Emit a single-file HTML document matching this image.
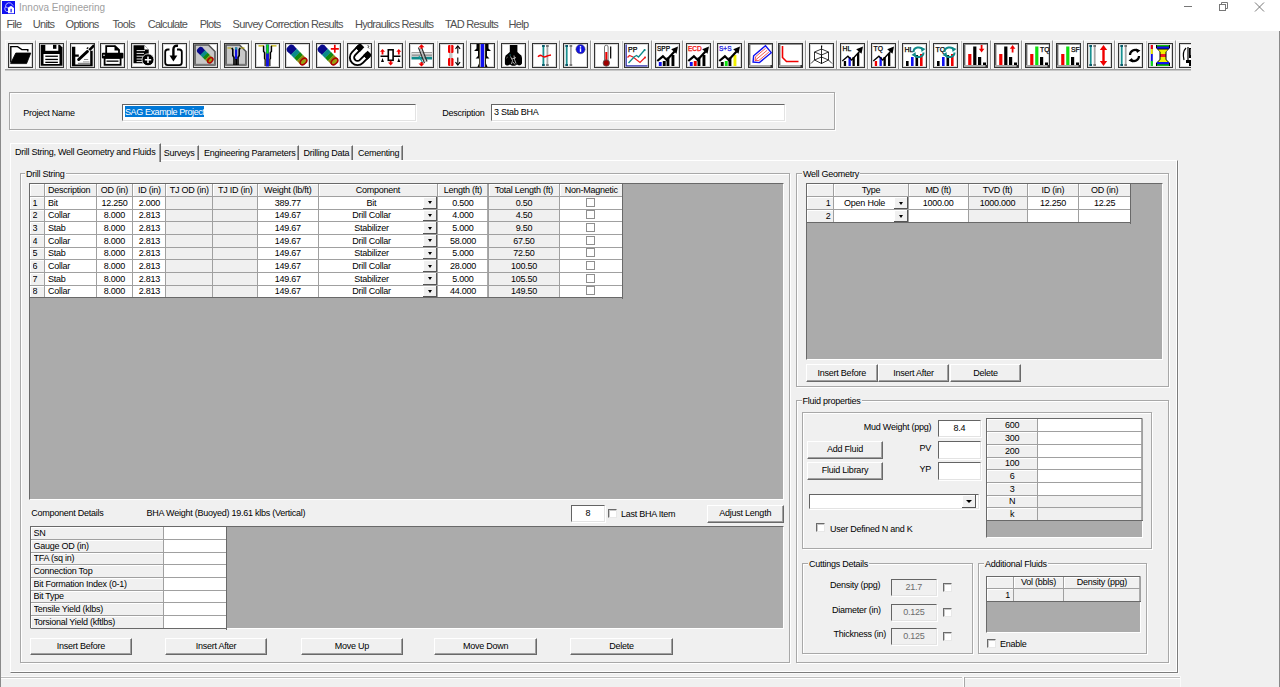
<!DOCTYPE html><html><head><meta charset="utf-8"><style>
html,body{margin:0;padding:0;}
body{width:1280px;height:687px;overflow:hidden;position:relative;background:#f0f0f0;font-family:"Liberation Sans", sans-serif;font-size:9px;color:#000;}
div{position:absolute;box-sizing:content-box;}
.t{white-space:nowrap;line-height:1;letter-spacing:-0.25px;}
.btn{border-top:1px solid #fff;border-left:1px solid #fff;border-right:1px solid #696969;border-bottom:1px solid #696969;box-shadow:inset -1px -1px 0 #a0a0a0;background:#f0f0f0;text-align:center;white-space:nowrap;letter-spacing:-0.25px;}
.tb{border-top:1px solid #646464;border-left:1px solid #646464;border-right:1px solid #e3e3e3;border-bottom:1px solid #e3e3e3;box-shadow:1px 1px 0 #fff;white-space:nowrap;overflow:hidden;letter-spacing:-0.25px;}
.ic{position:absolute;}
</style></head><body>
<div style="left:0px;top:0px;width:1280px;height:31px;background:#fff;"></div>
<div style="left:0px;top:0px;width:1px;height:687px;background:#8a8a8a;"></div>
<div style="left:1279px;top:31px;width:1px;height:656px;background:#8a8a8a;"></div>
<svg class="ic" style="left:2px;top:1px" width="13" height="13" viewBox="0 0 13 13"><rect width="13" height="13" fill="#1010f0"/><path d="M4 6.5 Q3 4.5 4.5 2.8 Q6.5 1.2 8.5 2 L11.5 4.8" fill="none" stroke="#c8c8ff" stroke-width="0.9"/><path d="M3.5 5.5 Q2.2 8 3.2 9.5 Q4.5 11 6.5 10.5" fill="none" stroke="#c8c8ff" stroke-width="0.9"/><path d="M4.2 6.2 Q6 8 7.5 6" fill="none" stroke="#c8c8ff" stroke-width="0.8"/><path d="M6 7 L9 4.8 L12 7 V12.2 H6 Z" fill="#fff"/><rect x="8.5" y="7.8" width="1.2" height="3.5" fill="#1010f0"/></svg>
<div class="t" style="left:19px;top:3.2px;font-size:10px;color:#a0a0a0;letter-spacing:0;">Innova Engineering</div>
<div style="left:1184px;top:6px;width:8px;height:1px;background:#777;"></div>
<svg class="ic" style="left:1218px;top:1px" width="11" height="11" viewBox="0 0 11 11"><rect x="1.5" y="3.5" width="6" height="6" fill="none" stroke="#777"/><path d="M3.5 3.5 V1.5 H9.5 V7.5 H7.5" fill="none" stroke="#777"/></svg>
<svg class="ic" style="left:1254px;top:2px" width="11" height="10" viewBox="0 0 11 10"><path d="M1 0.5 L10 9.5 M10 0.5 L1 9.5" stroke="#666" stroke-width="0.9"/></svg>
<div class="t" style="left:6.6px;top:18.6px;font-size:11px;color:#505050;letter-spacing:-0.7px;">File</div>
<div class="t" style="left:32.8px;top:18.6px;font-size:11px;color:#505050;letter-spacing:-0.7px;">Units</div>
<div class="t" style="left:65.6px;top:18.6px;font-size:11px;color:#505050;letter-spacing:-0.7px;">Options</div>
<div class="t" style="left:112.5px;top:18.6px;font-size:11px;color:#505050;letter-spacing:-0.7px;">Tools</div>
<div class="t" style="left:147.7px;top:18.6px;font-size:11px;color:#505050;letter-spacing:-0.7px;">Calculate</div>
<div class="t" style="left:199.7px;top:18.6px;font-size:11px;color:#505050;letter-spacing:-0.7px;">Plots</div>
<div class="t" style="left:232.6px;top:18.6px;font-size:11px;color:#505050;letter-spacing:-0.7px;">Survey Correction Results</div>
<div class="t" style="left:354.9px;top:18.6px;font-size:11px;color:#505050;letter-spacing:-0.7px;">Hydraulics Results</div>
<div class="t" style="left:444.9px;top:18.6px;font-size:11px;color:#505050;letter-spacing:-0.7px;">TAD Results</div>
<div class="t" style="left:508.5px;top:18.6px;font-size:11px;color:#505050;letter-spacing:-0.7px;">Help</div>
<div style="left:5px;top:40px;width:29px;height:29px;border-top:1px solid #fbfbfb;border-left:1px solid #fbfbfb;border-right:1px solid #9a9a9a;border-bottom:1px solid #a0a0a0;box-shadow:1px 0 0 #c4c4c4;"></div>
<div style="left:8px;top:43px;width:23px;height:23px;border:1px solid #333;background:#fff;overflow:hidden;box-shadow:inset 0 0 0 1px #d8d8d8"><svg width="23" height="23" viewBox="0 0 23 23" style="position:absolute;left:0;top:0"><path d="M1.8 18.5 V2.6 H8.6 L12.8 5.6 H18.8 V7.5" fill="none" stroke="#000" stroke-width="1.4"/><path d="M1.6 19.6 L6.8 9 H21.8 L17.6 19.6 Z" fill="#000" stroke="#000" stroke-width="0.8" stroke-linejoin="round"/></svg></div>
<div style="left:36px;top:40px;width:29px;height:29px;border-top:1px solid #fbfbfb;border-left:1px solid #fbfbfb;border-right:1px solid #9a9a9a;border-bottom:1px solid #a0a0a0;box-shadow:1px 0 0 #c4c4c4;"></div>
<div style="left:39px;top:43px;width:23px;height:23px;border:1px solid #333;background:#fff;overflow:hidden;box-shadow:inset 0 0 0 1px #d8d8d8"><svg width="23" height="23" viewBox="0 0 23 23" style="position:absolute;left:0;top:0"><path d="M0.8 0.8 H19.8 L22.4 3.4 V21.8 H0.8 Z" fill="#000"/><rect x="5.3" y="0.8" width="13" height="6" fill="#fff"/><rect x="13" y="0.8" width="3.4" height="4" fill="#000"/><rect x="3.5" y="10" width="16" height="10" fill="#fff"/><rect x="5.3" y="11.6" width="12.6" height="1.3" fill="#000"/><rect x="5.3" y="14.8" width="12.6" height="1.3" fill="#000"/><rect x="5.3" y="17.7" width="12.6" height="1.3" fill="#000"/></svg></div>
<div style="left:67px;top:40px;width:29px;height:29px;border-top:1px solid #fbfbfb;border-left:1px solid #fbfbfb;border-right:1px solid #9a9a9a;border-bottom:1px solid #a0a0a0;box-shadow:1px 0 0 #c4c4c4;"></div>
<div style="left:70px;top:43px;width:23px;height:23px;border:1px solid #333;background:#fff;overflow:hidden;box-shadow:inset 0 0 0 1px #d8d8d8"><svg width="23" height="23" viewBox="0 0 23 23" style="position:absolute;left:0;top:0"><path d="M1 2.7 H4.3 V10.4 H7.8 V12.7 H4.3 V20.6 H19.2 V6.8 H21.7 V22.2 H1 Z" fill="#000"/><path d="M7.6 15.6 L16.5 7.4" stroke="#000" stroke-width="2.8" stroke-linecap="round"/><path d="M18.3 6.2 L23.2 1.2" stroke="#000" stroke-width="2.6"/><rect x="15.5" y="3.5" width="2" height="1.3" fill="#000" transform="rotate(-40 16.5 4.1)"/><path d="M13 15.5 H17.2 M6.9 19.3 H18.9" stroke="#8a8a8a" stroke-width="1.2"/><path d="M12 17.8 H18.5" stroke="#555" stroke-width="0.5"/></svg></div>
<div style="left:97px;top:40px;width:29px;height:29px;border-top:1px solid #fbfbfb;border-left:1px solid #fbfbfb;border-right:1px solid #9a9a9a;border-bottom:1px solid #a0a0a0;box-shadow:1px 0 0 #c4c4c4;"></div>
<div style="left:100px;top:43px;width:23px;height:23px;border:1px solid #333;background:#fff;overflow:hidden;box-shadow:inset 0 0 0 1px #d8d8d8"><svg width="23" height="23" viewBox="0 0 23 23" style="position:absolute;left:0;top:0"><path d="M5.2 9.5 V2.1 H14 L18 6 V9.5" fill="none" stroke="#000" stroke-width="1.8"/><path d="M13.5 1.2 L18.8 6.5 H13.5 Z" fill="#000"/><rect x="0.9" y="8.8" width="21.5" height="5.8" rx="1" fill="#000"/><circle cx="3" cy="11.2" r="0.8" fill="#fff"/><rect x="3.6" y="14" width="16" height="6.8" fill="#fff" stroke="#000" stroke-width="1.8"/><rect x="5.5" y="16.5" width="12" height="1.3" fill="#000"/></svg></div>
<div style="left:128px;top:40px;width:29px;height:29px;border-top:1px solid #fbfbfb;border-left:1px solid #fbfbfb;border-right:1px solid #9a9a9a;border-bottom:1px solid #a0a0a0;box-shadow:1px 0 0 #c4c4c4;"></div>
<div style="left:131px;top:43px;width:23px;height:23px;border:1px solid #333;background:#fff;overflow:hidden;box-shadow:inset 0 0 0 1px #d8d8d8"><svg width="23" height="23" viewBox="0 0 23 23" style="position:absolute;left:0;top:0"><path d="M1.5 1.2 H12.5 L16.7 5.5 V19.2 H1.5 Z" fill="#000"/><path d="M12.3 1.2 V5.6 H16.8 Z" fill="#fff"/><path d="M4.6 6.6 H13 M4.6 9.4 H12 M4.6 12.2 H11 M4.6 15 H10 M4.6 17.6 H10" stroke="#fff" stroke-width="0.9"/><circle cx="16" cy="15.8" r="6" fill="#000" stroke="#fff" stroke-width="0.8"/><path d="M16 12.6 V19 M12.8 15.8 H19.2" stroke="#fff" stroke-width="1.5"/></svg></div>
<div style="left:159px;top:40px;width:29px;height:29px;border-top:1px solid #fbfbfb;border-left:1px solid #fbfbfb;border-right:1px solid #9a9a9a;border-bottom:1px solid #a0a0a0;box-shadow:1px 0 0 #c4c4c4;"></div>
<div style="left:162px;top:43px;width:23px;height:23px;border:1px solid #333;background:#fff;overflow:hidden;box-shadow:inset 0 0 0 1px #d8d8d8"><svg width="23" height="23" viewBox="0 0 23 23" style="position:absolute;left:0;top:0"><path d="M6.5 5.5 H4.8 Q2.2 5.5 2.2 8.1 V18.6 Q2.2 21.2 4.8 21.2 H16.2 Q18.8 21.2 18.8 18.6 V8.1 Q18.8 5.5 16.2 5.5 H14" fill="none" stroke="#000" stroke-width="1.8"/><path d="M15 1.8 Q10.4 1.2 10.4 5.5 V12.5" stroke="#000" stroke-width="2.4" fill="none"/><path d="M6.5 11.5 H14.3 L10.4 17.5 Z" fill="#000"/></svg></div>
<div style="left:190px;top:40px;width:29px;height:29px;border-top:1px solid #fbfbfb;border-left:1px solid #fbfbfb;border-right:1px solid #9a9a9a;border-bottom:1px solid #a0a0a0;box-shadow:1px 0 0 #c4c4c4;"></div>
<div style="left:193px;top:43px;width:23px;height:23px;border:1px solid #333;background:#fff;overflow:hidden;box-shadow:inset 0 0 0 1px #d8d8d8"><svg width="23" height="23" viewBox="0 0 23 23" style="position:absolute;left:0;top:0"><path d="M1 1 H14.5 L21 7.5 V21.8 H1 Z" fill="#c8c8c8"/><path d="M1 21.8 V1 H14.5 L21 7.5 V21.8" fill="none" stroke="#555" stroke-width="1.6"/><rect x="1" y="19.8" width="20" height="2.2" fill="#777"/><g transform="translate(11 11) rotate(45)"><rect x="-9.54" y="-3.4" width="5.44" height="6.8" rx="2.72" fill="#0a0a8c"/><rect x="-7.5" y="-3.4" width="4.4" height="6.8" fill="#0a0a8c"/><rect x="-3.3" y="-3.4" width="3.8000000000000007" height="6.8" fill="#0a8a8a"/><rect x="0.3000000000000007" y="-3.4" width="3.1999999999999984" height="6.8" fill="#108a10"/><rect x="3.299999999999999" y="-3.4" width="4.400000000000001" height="6.8" fill="#8a8a10"/><ellipse cx="7.5" cy="0" rx="2.04" ry="3.06" fill="#9aa010" stroke="#b00000" stroke-width="1.5"/></g></svg></div>
<div style="left:221px;top:40px;width:29px;height:29px;border-top:1px solid #fbfbfb;border-left:1px solid #fbfbfb;border-right:1px solid #9a9a9a;border-bottom:1px solid #a0a0a0;box-shadow:1px 0 0 #c4c4c4;"></div>
<div style="left:224px;top:43px;width:23px;height:23px;border:1px solid #333;background:#fff;overflow:hidden;box-shadow:inset 0 0 0 1px #d8d8d8"><svg width="23" height="23" viewBox="0 0 23 23" style="position:absolute;left:0;top:0"><path d="M1 1 H14.5 L21 7.5 V21.8 H1 Z" fill="#c8c8c8"/><path d="M1 21.8 V1 H14.5 L21 7.5 V21.8" fill="none" stroke="#555" stroke-width="1.6"/><rect x="1" y="19.8" width="20" height="2.2" fill="#777"/><path d="M2.5 4 H6.5 M15.5 4 H19.5" stroke="#b8a800" stroke-width="1.2"/><path d="M6.8 4 L7.8 5.5 V11.5 L9 13.5 V21 M15.2 4 L14.2 5.5 V11.5 L13 13.5 V21" fill="none" stroke="#000" stroke-width="1.6"/><rect x="10" y="3.5" width="2.2" height="12" fill="#1010e0"/><rect x="10" y="3.5" width="2.2" height="2" fill="#1a9a9a"/><rect x="10.2" y="15" width="1.8" height="6" fill="#000"/></svg></div>
<div style="left:252px;top:40px;width:29px;height:29px;border-top:1px solid #fbfbfb;border-left:1px solid #fbfbfb;border-right:1px solid #9a9a9a;border-bottom:1px solid #a0a0a0;box-shadow:1px 0 0 #c4c4c4;"></div>
<div style="left:255px;top:43px;width:23px;height:23px;border:1px solid #333;background:#fff;overflow:hidden;box-shadow:inset 0 0 0 1px #d8d8d8"><svg width="23" height="23" viewBox="0 0 23 23" style="position:absolute;left:0;top:0"><path d="M2.5 1.8 H8 M15 1.8 H20.5" stroke="#c0b000" stroke-width="1.3"/><path d="M7.6 1.8 V7.5 L8.6 8.5 V14.5 L9.3 15.5 V22 M15.4 1.8 V7.5 L14.4 8.5 V14.5 L13.7 15.5 V22" fill="none" stroke="#000" stroke-width="1.5"/><rect x="9.8" y="0.5" width="3.4" height="22" fill="#1010e0"/><rect x="10.3" y="0.5" width="2.4" height="9" fill="#10e010"/><path d="M9.6 9 V22 M13.4 9 V22" stroke="#a09020" stroke-width="0.6"/></svg></div>
<div style="left:282px;top:40px;width:29px;height:29px;border-top:1px solid #fbfbfb;border-left:1px solid #fbfbfb;border-right:1px solid #9a9a9a;border-bottom:1px solid #a0a0a0;box-shadow:1px 0 0 #c4c4c4;"></div>
<div style="left:285px;top:43px;width:23px;height:23px;border:1px solid #333;background:#fff;overflow:hidden;box-shadow:inset 0 0 0 1px #d8d8d8"><svg width="23" height="23" viewBox="0 0 23 23" style="position:absolute;left:0;top:0"><g transform="translate(10.8 10.8) rotate(45)"><rect x="-12.05" y="-4.25" width="6.800000000000001" height="8.5" rx="3.4000000000000004" fill="#0a0a8c"/><rect x="-9.5" y="-4.25" width="5.5200000000000005" height="8.5" fill="#0a0a8c"/><rect x="-4.18" y="-4.25" width="4.760000000000001" height="8.5" fill="#0a8a8a"/><rect x="0.3800000000000008" y="-4.25" width="3.999999999999999" height="8.5" fill="#108a10"/><rect x="4.18" y="-4.25" width="5.5200000000000005" height="8.5" fill="#8a8a10"/><ellipse cx="9.5" cy="0" rx="2.55" ry="3.825" fill="#9aa010" stroke="#b00000" stroke-width="1.5"/></g></svg></div>
<div style="left:313px;top:40px;width:29px;height:29px;border-top:1px solid #fbfbfb;border-left:1px solid #fbfbfb;border-right:1px solid #9a9a9a;border-bottom:1px solid #a0a0a0;box-shadow:1px 0 0 #c4c4c4;"></div>
<div style="left:316px;top:43px;width:23px;height:23px;border:1px solid #333;background:#fff;overflow:hidden;box-shadow:inset 0 0 0 1px #d8d8d8"><svg width="23" height="23" viewBox="0 0 23 23" style="position:absolute;left:0;top:0"><g transform="translate(10.8 10.8) rotate(45)"><rect x="-12.05" y="-4.25" width="6.800000000000001" height="8.5" rx="3.4000000000000004" fill="#0a0a8c"/><rect x="-9.5" y="-4.25" width="5.5200000000000005" height="8.5" fill="#0a0a8c"/><rect x="-4.18" y="-4.25" width="4.760000000000001" height="8.5" fill="#0a8a8a"/><rect x="0.3800000000000008" y="-4.25" width="3.999999999999999" height="8.5" fill="#108a10"/><rect x="4.18" y="-4.25" width="5.5200000000000005" height="8.5" fill="#8a8a10"/><ellipse cx="9.5" cy="0" rx="2.55" ry="3.825" fill="#9aa010" stroke="#b00000" stroke-width="1.5"/></g><path d="M17.8 0.8 V8.8 M13.8 4.8 H21.8" stroke="#f00000" stroke-width="1.7"/></svg></div>
<div style="left:344px;top:40px;width:29px;height:29px;border-top:1px solid #fbfbfb;border-left:1px solid #fbfbfb;border-right:1px solid #9a9a9a;border-bottom:1px solid #a0a0a0;box-shadow:1px 0 0 #c4c4c4;"></div>
<div style="left:347px;top:43px;width:23px;height:23px;border:1px solid #333;background:#fff;overflow:hidden;box-shadow:inset 0 0 0 1px #d8d8d8"><svg width="23" height="23" viewBox="0 0 23 23" style="position:absolute;left:0;top:0"><g transform="translate(-1.5 1) rotate(45 11 12.5)"><path d="M5.5 3 V12.5 A5.5 5.5 0 0 0 16.5 12.5 V3" fill="none" stroke="#000" stroke-width="6.2"/><path d="M5.5 7 V12.5 A5.5 5.5 0 0 0 16.5 12.5 V7" fill="none" stroke="#fff" stroke-width="2.4"/><rect x="2.4" y="0.5" width="6.2" height="6.5" fill="#000"/><rect x="13.4" y="0.5" width="6.2" height="6.5" fill="#000"/></g><path d="M19.5 1 L21 2.5 L19.8 3 L21.2 4.5" stroke="#333" stroke-width="0.8" fill="none"/></svg></div>
<div style="left:375px;top:40px;width:29px;height:29px;border-top:1px solid #fbfbfb;border-left:1px solid #fbfbfb;border-right:1px solid #9a9a9a;border-bottom:1px solid #a0a0a0;box-shadow:1px 0 0 #c4c4c4;"></div>
<div style="left:378px;top:43px;width:23px;height:23px;border:1px solid #333;background:#fff;overflow:hidden;box-shadow:inset 0 0 0 1px #d8d8d8"><svg width="23" height="23" viewBox="0 0 23 23" style="position:absolute;left:0;top:0"><rect x="9.3" y="5.8" width="4.8" height="10.5" fill="#fff" stroke="#000" stroke-width="1.6"/><path d="M1.5 12.2 H9 M14.5 12.2 H21.5" stroke="#000" stroke-width="1.4"/><path d="M3.5 5 L1 7.8 H2.6 V10.5 H4.4 V7.8 H6 Z M19.8 5 L17.3 7.8 H18.9 V10.5 H20.7 V7.8 H22.3 Z" fill="#f00000"/><path d="M11.7 21.5 L9 18.5 H10.8 V16.8 H12.6 V18.5 H14.4 Z" fill="#f00000"/><path d="M3.5 14 L2 18 H5 Z M19.8 14 L18.3 18 H21.3 Z" fill="#000"/></svg></div>
<div style="left:406px;top:40px;width:29px;height:29px;border-top:1px solid #fbfbfb;border-left:1px solid #fbfbfb;border-right:1px solid #9a9a9a;border-bottom:1px solid #a0a0a0;box-shadow:1px 0 0 #c4c4c4;"></div>
<div style="left:409px;top:43px;width:23px;height:23px;border:1px solid #333;background:#fff;overflow:hidden;box-shadow:inset 0 0 0 1px #d8d8d8"><svg width="23" height="23" viewBox="0 0 23 23" style="position:absolute;left:0;top:0"><rect x="1.5" y="8" width="20.5" height="4.5" fill="#9c9c9c"/><rect x="1.5" y="9" width="20.5" height="1.4" fill="#e0e0e0"/><rect x="1.5" y="12.5" width="20.5" height="3" fill="#108a8a"/><rect x="1.5" y="12.2" width="20.5" height="0.8" fill="#d0d0d0"/><path d="M8.5 3.5 L14.5 19 M11.5 3.5 L17 17.5" stroke="#333" stroke-width="1.3"/><path d="M10 4 L15.5 18" stroke="#bbb" stroke-width="1.2"/><path d="M9 12 L13 19.5" stroke="#1a9a9a" stroke-width="1.2"/><path d="M11.5 0.3 L8.5 3.3 H10.5 V4.8 H12.5 V3.3 H14.5 Z M11.5 22.5 L8.5 19.5 H10.5 V18 H12.5 V19.5 H14.5 Z" fill="#f00000"/></svg></div>
<div style="left:436px;top:40px;width:29px;height:29px;border-top:1px solid #fbfbfb;border-left:1px solid #fbfbfb;border-right:1px solid #9a9a9a;border-bottom:1px solid #a0a0a0;box-shadow:1px 0 0 #c4c4c4;"></div>
<div style="left:439px;top:43px;width:23px;height:23px;border:1px solid #333;background:#fff;overflow:hidden;box-shadow:inset 0 0 0 1px #d8d8d8"><svg width="23" height="23" viewBox="0 0 23 23" style="position:absolute;left:0;top:0"><rect x="8" y="1" width="5.5" height="8" rx="1.2" fill="#f00000"/><rect x="8" y="14" width="5.5" height="8" rx="1.2" fill="#f00000"/><rect x="10.4" y="1" width="0.8" height="21" fill="#fff"/><rect x="9" y="9" width="3.5" height="5" fill="#c8c8c8"/><path d="M17.8 2.5 V9.5 M17.8 13.5 V20.5" stroke="#000" stroke-width="1.1"/><path d="M15.5 4.8 L17.8 1.8 L20.1 4.8 M15.5 18.2 L17.8 21.2 L20.1 18.2" fill="none" stroke="#000" stroke-width="1.1"/></svg></div>
<div style="left:467px;top:40px;width:29px;height:29px;border-top:1px solid #fbfbfb;border-left:1px solid #fbfbfb;border-right:1px solid #9a9a9a;border-bottom:1px solid #a0a0a0;box-shadow:1px 0 0 #c4c4c4;"></div>
<div style="left:470px;top:43px;width:23px;height:23px;border:1px solid #333;background:#fff;overflow:hidden;box-shadow:inset 0 0 0 1px #d8d8d8"><svg width="23" height="23" viewBox="0 0 23 23" style="position:absolute;left:0;top:0"><rect x="9.6" y="0" width="3.6" height="23" fill="#1010f0"/><path d="M5.5 0 H8.8 V23 H6.5 L8 19.5 V14.5 L4.5 14.5 L7 12 V7 L3 7 L5.5 4.5 Z" fill="#000"/><path d="M17.5 0 H14 V23 H16.5 L15 19.5 V14.5 L18.5 14.5 L16 12 V7 L20 7 L17.5 4.5 Z" fill="#000"/><path d="M8.8 0 V23 M14 0 V23" stroke="#8a7a40" stroke-width="0.5"/></svg></div>
<div style="left:498px;top:40px;width:29px;height:29px;border-top:1px solid #fbfbfb;border-left:1px solid #fbfbfb;border-right:1px solid #9a9a9a;border-bottom:1px solid #a0a0a0;box-shadow:1px 0 0 #c4c4c4;"></div>
<div style="left:501px;top:43px;width:23px;height:23px;border:1px solid #333;background:#fff;overflow:hidden;box-shadow:inset 0 0 0 1px #d8d8d8"><svg width="23" height="23" viewBox="0 0 23 23" style="position:absolute;left:0;top:0"><path d="M7.8 0.9 H15.4 V8 L17.5 10 Q20 11 20 14 V19.5 Q19 21.5 17 21.5 L15 20.5 L13 21.8 H10 L8 20.5 L6 21.5 Q3 21.5 2.9 19.5 V14 Q3 11 5.5 10 L7.8 8 Z" fill="#000"/><path d="M8.5 12.5 L10.5 16.5 L9.5 20 M12 11.5 L12.5 15.5 L14 19.5 M10 15 L14 13.5 M4.5 14 L5.5 13.2 M11 18 L13 20.5" fill="none" stroke="#d8d8d8" stroke-width="0.8"/><rect x="7.5" y="10.5" width="1.2" height="1" fill="#1a9a9a"/></svg></div>
<div style="left:529px;top:40px;width:29px;height:29px;border-top:1px solid #fbfbfb;border-left:1px solid #fbfbfb;border-right:1px solid #9a9a9a;border-bottom:1px solid #a0a0a0;box-shadow:1px 0 0 #c4c4c4;"></div>
<div style="left:532px;top:43px;width:23px;height:23px;border:1px solid #333;background:#fff;overflow:hidden;box-shadow:inset 0 0 0 1px #d8d8d8"><svg width="23" height="23" viewBox="0 0 23 23" style="position:absolute;left:0;top:0"><rect x="9.5" y="1" width="1.8" height="21" fill="#1a9090"/><rect x="9.1" y="1" width="2.6" height="2" fill="#0a5a6a"/><rect x="9.1" y="20" width="2.6" height="2" fill="#0a5a6a"/><rect x="13.5" y="1" width="1.8" height="21" fill="#a8a8a8"/><rect x="13.1" y="1" width="2.6" height="2" fill="#777"/><rect x="13.1" y="20" width="2.6" height="2" fill="#777"/><path d="M5 12.8 Q7 10.5 9 12 T13 12.5 T18 11" fill="none" stroke="#f00000" stroke-width="1.5"/></svg></div>
<div style="left:560px;top:40px;width:29px;height:29px;border-top:1px solid #fbfbfb;border-left:1px solid #fbfbfb;border-right:1px solid #9a9a9a;border-bottom:1px solid #a0a0a0;box-shadow:1px 0 0 #c4c4c4;"></div>
<div style="left:563px;top:43px;width:23px;height:23px;border:1px solid #333;background:#fff;overflow:hidden;box-shadow:inset 0 0 0 1px #d8d8d8"><svg width="23" height="23" viewBox="0 0 23 23" style="position:absolute;left:0;top:0"><rect x="1.8" y="1" width="1.8" height="21" fill="#1a9090"/><rect x="1.4" y="1" width="2.6" height="2" fill="#0a5a6a"/><rect x="1.4" y="20" width="2.6" height="2" fill="#0a5a6a"/><rect x="6" y="1" width="1.8" height="21" fill="#a8a8a8"/><rect x="5.6" y="1" width="2.6" height="2" fill="#777"/><rect x="5.6" y="20" width="2.6" height="2" fill="#777"/><circle cx="16.5" cy="5.2" r="4.6" fill="#1010e0" stroke="#555" stroke-width="0.5"/><rect x="15.8" y="4.3" width="1.4" height="3.6" fill="#fff"/><circle cx="16.5" cy="2.9" r="0.8" fill="#fff"/></svg></div>
<div style="left:591px;top:40px;width:29px;height:29px;border-top:1px solid #fbfbfb;border-left:1px solid #fbfbfb;border-right:1px solid #9a9a9a;border-bottom:1px solid #a0a0a0;box-shadow:1px 0 0 #c4c4c4;"></div>
<div style="left:594px;top:43px;width:23px;height:23px;border:1px solid #333;background:#fff;overflow:hidden;box-shadow:inset 0 0 0 1px #d8d8d8"><svg width="23" height="23" viewBox="0 0 23 23" style="position:absolute;left:0;top:0"><path d="M9.5 16 V3 A1.8 1.8 0 0 1 13.1 3 V16" fill="#fff" stroke="#777" stroke-width="1"/><rect x="10.3" y="8" width="2" height="10" fill="#f00000"/><circle cx="11.3" cy="19" r="3.2" fill="#a00000" stroke="#555" stroke-width="0.8"/><rect x="15" y="2.5" width="1.3" height="12" fill="#111"/></svg></div>
<div style="left:621px;top:40px;width:29px;height:29px;border-top:1px solid #fbfbfb;border-left:1px solid #fbfbfb;border-right:1px solid #9a9a9a;border-bottom:1px solid #a0a0a0;box-shadow:1px 0 0 #c4c4c4;"></div>
<div style="left:624px;top:43px;width:23px;height:23px;border:1px solid #333;background:#fff;overflow:hidden;box-shadow:inset 0 0 0 1px #d8d8d8"><svg width="23" height="23" viewBox="0 0 23 23" style="position:absolute;left:0;top:0"><path d="M1.2 0.5 V21.8 H22.5" fill="none" stroke="#3030b0" stroke-width="1.2"/><text x="3" y="7.5" font-family="Liberation Sans" font-size="7" font-weight="normal" fill="#000" letter-spacing="0" stroke="#000" stroke-width="0.25">PP</text><path d="M2.5 13.5 L4.5 11.5 L8 13 L15 18.5 L20.5 13" fill="none" stroke="#f02020" stroke-width="1.3"/><circle cx="20" cy="13.5" r="1" fill="#f02020"/><path d="M3.5 19 L9 13 L11.5 11.5 L13.5 13 L20 5.5" fill="none" stroke="#108a8a" stroke-width="1.3"/><circle cx="19.6" cy="6" r="1" fill="#108a8a"/></svg></div>
<div style="left:652px;top:40px;width:29px;height:29px;border-top:1px solid #fbfbfb;border-left:1px solid #fbfbfb;border-right:1px solid #9a9a9a;border-bottom:1px solid #a0a0a0;box-shadow:1px 0 0 #c4c4c4;"></div>
<div style="left:655px;top:43px;width:23px;height:23px;border:1px solid #333;background:#fff;overflow:hidden;box-shadow:inset 0 0 0 1px #d8d8d8"><svg width="23" height="23" viewBox="0 0 23 23" style="position:absolute;left:0;top:0"><text x="1" y="7" font-family="Liberation Sans" font-size="6.5" font-weight="normal" fill="#000" letter-spacing="0" stroke="#000" stroke-width="0.25">SPP</text><rect x="2.8" y="18" width="2.9" height="4" fill="#1010f0"/><rect x="6.8" y="17" width="2.9" height="5" fill="#000"/><rect x="10.5" y="13.5" width="2.9" height="8.5" fill="#000"/><rect x="15.5" y="11" width="2.9" height="11" fill="#000"/><path d="M1.3 17 L6.9 12.3 L10.7 16 L18.5 7.5" fill="none" stroke="#000" stroke-width="2.2"/><path d="M15.2 5.2 L22 2.5 L20.5 9.8 Z" fill="#000"/></svg></div>
<div style="left:683px;top:40px;width:29px;height:29px;border-top:1px solid #fbfbfb;border-left:1px solid #fbfbfb;border-right:1px solid #9a9a9a;border-bottom:1px solid #a0a0a0;box-shadow:1px 0 0 #c4c4c4;"></div>
<div style="left:686px;top:43px;width:23px;height:23px;border:1px solid #333;background:#fff;overflow:hidden;box-shadow:inset 0 0 0 1px #d8d8d8"><svg width="23" height="23" viewBox="0 0 23 23" style="position:absolute;left:0;top:0"><text x="1" y="7" font-family="Liberation Sans" font-size="6.5" font-weight="normal" fill="#f00000" letter-spacing="0" stroke="#f00000" stroke-width="0.25">ECD</text><rect x="2.8" y="18" width="2.9" height="4" fill="#1010f0"/><rect x="6.8" y="17" width="2.9" height="5" fill="#f00000"/><rect x="10.5" y="13.5" width="2.9" height="8.5" fill="#000"/><rect x="15.5" y="11" width="2.9" height="11" fill="#000"/><path d="M1.3 17 L6.9 12.3 L10.7 16 L18.5 7.5" fill="none" stroke="#000" stroke-width="2.2"/><path d="M15.2 5.2 L22 2.5 L20.5 9.8 Z" fill="#000"/></svg></div>
<div style="left:714px;top:40px;width:29px;height:29px;border-top:1px solid #fbfbfb;border-left:1px solid #fbfbfb;border-right:1px solid #9a9a9a;border-bottom:1px solid #a0a0a0;box-shadow:1px 0 0 #c4c4c4;"></div>
<div style="left:717px;top:43px;width:23px;height:23px;border:1px solid #333;background:#fff;overflow:hidden;box-shadow:inset 0 0 0 1px #d8d8d8"><svg width="23" height="23" viewBox="0 0 23 23" style="position:absolute;left:0;top:0"><text x="1" y="7" font-family="Liberation Sans" font-size="6.5" font-weight="normal" fill="#1010e0" letter-spacing="0" stroke="#1010e0" stroke-width="0.25">S+S</text><rect x="2.8" y="18" width="2.9" height="4" fill="#000"/><rect x="6.8" y="17" width="2.9" height="5" fill="#10e010"/><rect x="10.5" y="13.5" width="2.9" height="8.5" fill="#000"/><rect x="15.5" y="11" width="2.9" height="11" fill="#f0f000"/><path d="M1.3 17 L6.9 12.3 L10.7 16 L18.5 7.5" fill="none" stroke="#000" stroke-width="2.2"/><path d="M15.2 5.2 L22 2.5 L20.5 9.8 Z" fill="#000"/></svg></div>
<div style="left:745px;top:40px;width:29px;height:29px;border-top:1px solid #fbfbfb;border-left:1px solid #fbfbfb;border-right:1px solid #9a9a9a;border-bottom:1px solid #a0a0a0;box-shadow:1px 0 0 #c4c4c4;"></div>
<div style="left:748px;top:43px;width:23px;height:23px;border:1px solid #333;background:#fff;overflow:hidden;box-shadow:inset 0 0 0 1px #d8d8d8"><svg width="23" height="23" viewBox="0 0 23 23" style="position:absolute;left:0;top:0"><rect x="0" y="0" width="1.4" height="23" fill="#666"/><rect x="0" y="0" width="23" height="0.8" fill="#888"/><rect x="0" y="21" width="23" height="2" fill="#a8a8a8"/><rect x="21.5" y="21" width="1.5" height="2" fill="#333"/><g transform="rotate(-40 12.5 11)"><path d="M1.5 11 L6 6.5 H21.5 V15.5 H6 Z" fill="#fff" stroke="#1010f0" stroke-width="1.4"/><path d="M4 11 L7 8.5 H20 M4.5 11 H20 M4 11 L7 13.5 H20" fill="none" stroke="#f02020" stroke-width="0.7"/></g></svg></div>
<div style="left:775px;top:40px;width:29px;height:29px;border-top:1px solid #fbfbfb;border-left:1px solid #fbfbfb;border-right:1px solid #9a9a9a;border-bottom:1px solid #a0a0a0;box-shadow:1px 0 0 #c4c4c4;"></div>
<div style="left:778px;top:43px;width:23px;height:23px;border:1px solid #333;background:#fff;overflow:hidden;box-shadow:inset 0 0 0 1px #d8d8d8"><svg width="23" height="23" viewBox="0 0 23 23" style="position:absolute;left:0;top:0"><rect x="0" y="0" width="1.4" height="23" fill="#666"/><rect x="0" y="0" width="23" height="0.8" fill="#888"/><rect x="0" y="21" width="23" height="2" fill="#a8a8a8"/><rect x="21.5" y="21" width="1.5" height="2" fill="#333"/><path d="M3.5 2 V13.5 L7.5 17.5 H19.5" fill="none" stroke="#f00000" stroke-width="1.6"/></svg></div>
<div style="left:806px;top:40px;width:29px;height:29px;border-top:1px solid #fbfbfb;border-left:1px solid #fbfbfb;border-right:1px solid #9a9a9a;border-bottom:1px solid #a0a0a0;box-shadow:1px 0 0 #c4c4c4;"></div>
<div style="left:809px;top:43px;width:23px;height:23px;border:1px solid #333;background:#fff;overflow:hidden;box-shadow:inset 0 0 0 1px #d8d8d8"><svg width="23" height="23" viewBox="0 0 23 23" style="position:absolute;left:0;top:0"><g fill="none" stroke="#000" stroke-width="0.8"><path d="M11.5 2 V19.5 M4.5 8 L11.5 5 L18.5 8 V16 L11.5 19.5 L4.5 16 Z M4.5 8 L11.5 11 L18.5 8 M11.5 11 V19.5 M4.5 16 L11.5 13 L18.5 16 M1 19.5 L4.5 16 M22 19.5 L18.5 16"/></g><rect x="11" y="1.5" width="1.2" height="2" fill="#000"/></svg></div>
<div style="left:837px;top:40px;width:29px;height:29px;border-top:1px solid #fbfbfb;border-left:1px solid #fbfbfb;border-right:1px solid #9a9a9a;border-bottom:1px solid #a0a0a0;box-shadow:1px 0 0 #c4c4c4;"></div>
<div style="left:840px;top:43px;width:23px;height:23px;border:1px solid #333;background:#fff;overflow:hidden;box-shadow:inset 0 0 0 1px #d8d8d8"><svg width="23" height="23" viewBox="0 0 23 23" style="position:absolute;left:0;top:0"><text x="1.5" y="7" font-family="Liberation Sans" font-size="6.8" font-weight="normal" fill="#000" letter-spacing="0" stroke="#000" stroke-width="0.25">HL</text><rect x="2.8" y="17" width="2.3" height="5" fill="#000"/><rect x="7.5" y="13" width="2.3" height="9" fill="#1010f0"/><rect x="11.5" y="13" width="2.3" height="9" fill="#000"/><rect x="16" y="9" width="2.3" height="13" fill="#000"/><path d="M1.3 17 L6.9 12.3 L10.7 16 L18.5 7.5" fill="none" stroke="#000" stroke-width="1.4"/><path d="M15.2 5.2 L22 2.5 L20.5 9.8 Z" fill="#000"/></svg></div>
<div style="left:868px;top:40px;width:29px;height:29px;border-top:1px solid #fbfbfb;border-left:1px solid #fbfbfb;border-right:1px solid #9a9a9a;border-bottom:1px solid #a0a0a0;box-shadow:1px 0 0 #c4c4c4;"></div>
<div style="left:871px;top:43px;width:23px;height:23px;border:1px solid #333;background:#fff;overflow:hidden;box-shadow:inset 0 0 0 1px #d8d8d8"><svg width="23" height="23" viewBox="0 0 23 23" style="position:absolute;left:0;top:0"><text x="1.5" y="7" font-family="Liberation Sans" font-size="6.8" font-weight="normal" fill="#000" letter-spacing="0" stroke="#000" stroke-width="0.25">TQ</text><rect x="2.8" y="17" width="2.3" height="5" fill="#f00000"/><rect x="7.5" y="13" width="2.3" height="9" fill="#1010f0"/><rect x="11.5" y="13" width="2.3" height="9" fill="#000"/><rect x="16" y="9" width="2.3" height="13" fill="#000"/><path d="M1.3 17 L6.9 12.3 L10.7 16 L18.5 7.5" fill="none" stroke="#000" stroke-width="1.4"/><path d="M15.2 5.2 L22 2.5 L20.5 9.8 Z" fill="#000"/></svg></div>
<div style="left:899px;top:40px;width:29px;height:29px;border-top:1px solid #fbfbfb;border-left:1px solid #fbfbfb;border-right:1px solid #9a9a9a;border-bottom:1px solid #a0a0a0;box-shadow:1px 0 0 #c4c4c4;"></div>
<div style="left:902px;top:43px;width:23px;height:23px;border:1px solid #333;background:#fff;overflow:hidden;box-shadow:inset 0 0 0 1px #d8d8d8"><svg width="23" height="23" viewBox="0 0 23 23" style="position:absolute;left:0;top:0"><text x="1.5" y="8" font-family="Liberation Sans" font-size="7" font-weight="normal" fill="#000" letter-spacing="0" stroke="#000" stroke-width="0.25">HL</text><rect x="3" y="17" width="2.6" height="5" fill="#000"/><rect x="8" y="13" width="2.6" height="9" fill="#1010f0"/><rect x="12.5" y="11" width="2.6" height="11" fill="#000"/><rect x="17" y="10" width="2.6" height="12" fill="#f00000"/><path d="M10.5 8 A5 4.5 0 0 1 20.0 6" fill="none" stroke="#108a8a" stroke-width="2"/><path d="M20.5 8.5 A5 4.5 0 0 1 11.0 10.5" fill="none" stroke="#108a8a" stroke-width="2"/><path d="M18.0 3 L22.5 5 L18.5 8 Z" fill="#108a8a"/><path d="M13.0 13 L8.5 11 L12.5 8 Z" fill="#108a8a"/></svg></div>
<div style="left:930px;top:40px;width:29px;height:29px;border-top:1px solid #fbfbfb;border-left:1px solid #fbfbfb;border-right:1px solid #9a9a9a;border-bottom:1px solid #a0a0a0;box-shadow:1px 0 0 #c4c4c4;"></div>
<div style="left:933px;top:43px;width:23px;height:23px;border:1px solid #333;background:#fff;overflow:hidden;box-shadow:inset 0 0 0 1px #d8d8d8"><svg width="23" height="23" viewBox="0 0 23 23" style="position:absolute;left:0;top:0"><text x="1.5" y="8" font-family="Liberation Sans" font-size="7" font-weight="normal" fill="#000" letter-spacing="0" stroke="#000" stroke-width="0.25">TQ</text><rect x="3" y="17" width="2.6" height="5" fill="#000"/><rect x="8" y="13" width="2.6" height="9" fill="#1010f0"/><rect x="12.5" y="11" width="2.6" height="11" fill="#000"/><rect x="17" y="10" width="2.6" height="12" fill="#f00000"/><path d="M10.5 8 A5 4.5 0 0 1 20.0 6" fill="none" stroke="#108a8a" stroke-width="2"/><path d="M20.5 8.5 A5 4.5 0 0 1 11.0 10.5" fill="none" stroke="#108a8a" stroke-width="2"/><path d="M18.0 3 L22.5 5 L18.5 8 Z" fill="#108a8a"/><path d="M13.0 13 L8.5 11 L12.5 8 Z" fill="#108a8a"/></svg></div>
<div style="left:960px;top:40px;width:29px;height:29px;border-top:1px solid #fbfbfb;border-left:1px solid #fbfbfb;border-right:1px solid #9a9a9a;border-bottom:1px solid #a0a0a0;box-shadow:1px 0 0 #c4c4c4;"></div>
<div style="left:963px;top:43px;width:23px;height:23px;border:1px solid #333;background:#fff;overflow:hidden;box-shadow:inset 0 0 0 1px #d8d8d8"><svg width="23" height="23" viewBox="0 0 23 23" style="position:absolute;left:0;top:0"><rect x="0" y="0" width="1.4" height="23" fill="#666"/><rect x="0" y="0" width="23" height="0.8" fill="#888"/><rect x="0" y="21" width="23" height="2" fill="#a8a8a8"/><rect x="21.5" y="21" width="1.5" height="2" fill="#333"/><rect x="4.2" y="10" width="3.2" height="11" fill="#f00000"/><rect x="9.2" y="2.5" width="3.2" height="18.5" fill="#000"/><rect x="14" y="13" width="3.2" height="8" fill="#000"/><rect x="19" y="18.5" width="3" height="2.5" fill="#000"/><path d="M17.6 1 V5.5" stroke="#f00000" stroke-width="1.8"/><path d="M14.8 4.8 H20.4 L17.6 8.5 Z" fill="#f00000"/></svg></div>
<div style="left:991px;top:40px;width:29px;height:29px;border-top:1px solid #fbfbfb;border-left:1px solid #fbfbfb;border-right:1px solid #9a9a9a;border-bottom:1px solid #a0a0a0;box-shadow:1px 0 0 #c4c4c4;"></div>
<div style="left:994px;top:43px;width:23px;height:23px;border:1px solid #333;background:#fff;overflow:hidden;box-shadow:inset 0 0 0 1px #d8d8d8"><svg width="23" height="23" viewBox="0 0 23 23" style="position:absolute;left:0;top:0"><rect x="0" y="0" width="1.4" height="23" fill="#666"/><rect x="0" y="0" width="23" height="0.8" fill="#888"/><rect x="0" y="21" width="23" height="2" fill="#a8a8a8"/><rect x="21.5" y="21" width="1.5" height="2" fill="#333"/><rect x="4.2" y="10" width="3.2" height="11" fill="#f00000"/><rect x="9.2" y="2.5" width="3.2" height="18.5" fill="#000"/><rect x="14" y="13" width="3.2" height="8" fill="#000"/><rect x="19" y="18.5" width="3" height="2.5" fill="#000"/><path d="M17.6 4 V8.5" stroke="#f00000" stroke-width="1.8"/><path d="M14.8 4.8 H20.4 L17.6 1 Z" fill="#f00000"/></svg></div>
<div style="left:1022px;top:40px;width:29px;height:29px;border-top:1px solid #fbfbfb;border-left:1px solid #fbfbfb;border-right:1px solid #9a9a9a;border-bottom:1px solid #a0a0a0;box-shadow:1px 0 0 #c4c4c4;"></div>
<div style="left:1025px;top:43px;width:23px;height:23px;border:1px solid #333;background:#fff;overflow:hidden;box-shadow:inset 0 0 0 1px #d8d8d8"><svg width="23" height="23" viewBox="0 0 23 23" style="position:absolute;left:0;top:0"><rect x="0" y="0" width="1.4" height="23" fill="#666"/><rect x="0" y="0" width="23" height="0.8" fill="#888"/><rect x="0" y="21" width="23" height="2" fill="#a8a8a8"/><rect x="21.5" y="21" width="1.5" height="2" fill="#333"/><rect x="4.2" y="10" width="3.2" height="11" fill="#f00000"/><rect x="9.2" y="2.5" width="3.2" height="18.5" fill="#10e010"/><rect x="14" y="13" width="3.2" height="8" fill="#000"/><rect x="19" y="18.5" width="3" height="2.5" fill="#000"/><text x="14" y="7.5" font-family="Liberation Sans" font-size="6.8" font-weight="normal" fill="#000" letter-spacing="0" stroke="#000" stroke-width="0.25">TQ</text></svg></div>
<div style="left:1053px;top:40px;width:29px;height:29px;border-top:1px solid #fbfbfb;border-left:1px solid #fbfbfb;border-right:1px solid #9a9a9a;border-bottom:1px solid #a0a0a0;box-shadow:1px 0 0 #c4c4c4;"></div>
<div style="left:1056px;top:43px;width:23px;height:23px;border:1px solid #333;background:#fff;overflow:hidden;box-shadow:inset 0 0 0 1px #d8d8d8"><svg width="23" height="23" viewBox="0 0 23 23" style="position:absolute;left:0;top:0"><rect x="0" y="0" width="1.4" height="23" fill="#666"/><rect x="0" y="0" width="23" height="0.8" fill="#888"/><rect x="0" y="21" width="23" height="2" fill="#a8a8a8"/><rect x="21.5" y="21" width="1.5" height="2" fill="#333"/><rect x="4.2" y="10" width="3.2" height="11" fill="#f00000"/><rect x="9.2" y="2.5" width="3.2" height="18.5" fill="#10e010"/><rect x="14" y="13" width="3.2" height="8" fill="#000"/><rect x="19" y="18.5" width="3" height="2.5" fill="#000"/><text x="14" y="7.5" font-family="Liberation Sans" font-size="6.8" font-weight="normal" fill="#000" letter-spacing="0" stroke="#000" stroke-width="0.25">SF</text></svg></div>
<div style="left:1084px;top:40px;width:29px;height:29px;border-top:1px solid #fbfbfb;border-left:1px solid #fbfbfb;border-right:1px solid #9a9a9a;border-bottom:1px solid #a0a0a0;box-shadow:1px 0 0 #c4c4c4;"></div>
<div style="left:1087px;top:43px;width:23px;height:23px;border:1px solid #333;background:#fff;overflow:hidden;box-shadow:inset 0 0 0 1px #d8d8d8"><svg width="23" height="23" viewBox="0 0 23 23" style="position:absolute;left:0;top:0"><rect x="1.8" y="1" width="1.8" height="21" fill="#1a9090"/><rect x="1.4" y="1" width="2.6" height="2" fill="#0a5a6a"/><rect x="1.4" y="20" width="2.6" height="2" fill="#0a5a6a"/><rect x="5.8" y="1" width="1.8" height="21" fill="#a8a8a8"/><rect x="5.3999999999999995" y="1" width="2.6" height="2" fill="#777"/><rect x="5.3999999999999995" y="20" width="2.6" height="2" fill="#777"/><path d="M15.5 5 V18" stroke="#f00000" stroke-width="2.4"/><path d="M11.8 6 L15.5 1 L19.2 6 Z M11.8 17 L15.5 22 L19.2 17 Z" fill="#f00000"/></svg></div>
<div style="left:1115px;top:40px;width:29px;height:29px;border-top:1px solid #fbfbfb;border-left:1px solid #fbfbfb;border-right:1px solid #9a9a9a;border-bottom:1px solid #a0a0a0;box-shadow:1px 0 0 #c4c4c4;"></div>
<div style="left:1118px;top:43px;width:23px;height:23px;border:1px solid #333;background:#fff;overflow:hidden;box-shadow:inset 0 0 0 1px #d8d8d8"><svg width="23" height="23" viewBox="0 0 23 23" style="position:absolute;left:0;top:0"><rect x="1.8" y="1" width="1.8" height="21" fill="#1a9090"/><rect x="1.4" y="1" width="2.6" height="2" fill="#0a5a6a"/><rect x="1.4" y="20" width="2.6" height="2" fill="#0a5a6a"/><rect x="5.8" y="1" width="1.8" height="21" fill="#a8a8a8"/><rect x="5.3999999999999995" y="1" width="2.6" height="2" fill="#777"/><rect x="5.3999999999999995" y="20" width="2.6" height="2" fill="#777"/><path d="M11 11 A5 5 0 0 1 19 7" fill="none" stroke="#000" stroke-width="2.2"/><path d="M20 12 A5 5 0 0 1 12 16" fill="none" stroke="#000" stroke-width="2.2"/><path d="M17 4.5 L21.5 6.5 L18 9 Z M14 18.5 L9.5 16.5 L13 14 Z" fill="#000"/></svg></div>
<div style="left:1145px;top:40px;width:29px;height:29px;border-top:1px solid #fbfbfb;border-left:1px solid #fbfbfb;border-right:1px solid #9a9a9a;border-bottom:1px solid #a0a0a0;box-shadow:1px 0 0 #c4c4c4;"></div>
<div style="left:1148px;top:43px;width:23px;height:23px;border:1px solid #333;background:#fff;overflow:hidden;box-shadow:inset 0 0 0 1px #d8d8d8"><svg width="23" height="23" viewBox="0 0 23 23" style="position:absolute;left:0;top:0"><rect x="1.8" y="1" width="2" height="21" fill="#1010e0"/><rect x="1.8" y="1" width="2" height="4" fill="#f00000"/><rect x="1.8" y="5" width="2" height="5" fill="#f0f000"/><rect x="1.8" y="17" width="2" height="5" fill="#10e010"/><path d="M7 1 H21 V4 L17.5 7.5 V15.5 L21 19 V22 H7 V19 L10.5 15.5 V7.5 L7 4 Z" fill="#000"/><rect x="8" y="1" width="12" height="1.6" fill="#10c010"/><rect x="8" y="2.6" width="12" height="2" fill="#1010f0"/><path d="M9 5.5 H19 L16.5 8 V10 H11.5 V8 Z" fill="#f0f000"/><rect x="11.5" y="10" width="5" height="3" fill="#f02020"/><path d="M11.5 13 H16.5 V15.5 L19 18 H9 L11.5 15.5 Z" fill="#f0f000"/><rect x="8" y="18" width="12" height="2.4" fill="#1010f0"/><rect x="8" y="20.4" width="12" height="1.6" fill="#10c010"/></svg></div>
<div style="left:1176px;top:40px;width:29px;height:29px;border-top:1px solid #fbfbfb;border-left:1px solid #fbfbfb;border-right:1px solid #9a9a9a;border-bottom:1px solid #a0a0a0;box-shadow:1px 0 0 #c4c4c4;"></div>
<div style="left:1176px;top:40px;width:15px;height:31px;overflow:hidden;">
<div style="left:3px;top:3px;width:23px;height:23px;border:1px solid #333;background:#fff;overflow:hidden;box-shadow:inset 0 0 0 1px #d8d8d8"><svg width="23" height="23" viewBox="0 0 23 23" style="position:absolute;left:0;top:0"><path d="M6 4 Q2 8 4 16 M8 3 V16" stroke="#000" stroke-width="1.2" fill="none"/><rect x="6" y="16" width="10" height="3" fill="#000"/><rect x="9" y="19" width="7" height="3" fill="#000"/><path d="M9 4 H16 V14 H9 Z" fill="#000"/><path d="M10 6 H15 M10 8 H15 M10 10 H15" stroke="#fff" stroke-width="0.6"/></svg></div>
</div>
<div style="left:1191px;top:38px;width:20px;height:34px;background:#f0f0f0;"></div>
<div style="left:5px;top:69px;width:1186px;height:1px;background:#a0a0a0;"></div>
<div style="left:5px;top:70px;width:1186px;height:1px;background:#c8c8c8;"></div>
<div style="left:10px;top:93px;width:824px;height:36px;border:1px solid #fff;"></div>
<div style="left:9px;top:92px;width:824px;height:36px;border:1px solid #a8a8a8;"></div>
<div class="t" style="left:23.3px;top:109px;">Project Name</div>
<div class="tb" style="left:122px;top:104px;width:292px;height:15px;line-height:15px;background:#fff;color:#000;text-align:left;padding:0 2px;box-sizing:content-box;width:288px"><span style="background:#0078d7;color:#fff;letter-spacing:-0.4px;padding:0.5px 0 0 0;position:relative;top:-0.5px">SAG Example Project</span></div>
<div class="t" style="left:442.3px;top:109px;">Description</div>
<div class="tb" style="left:491px;top:104px;width:292px;height:15px;line-height:15px;background:#fff;color:#000;text-align:left;padding:0 2px;box-sizing:content-box;width:288px">3 Stab BHA</div>
<div style="left:10px;top:160px;width:1166px;height:511px;border-top:1px solid #fff;border-left:1px solid #fff;border-right:1px solid #7c7c7c;border-bottom:1px solid #7c7c7c;box-shadow:inset -1px -1px 0 #fff,1px 1px 0 #fafafa;"></div>
<div style="left:160px;top:145px;width:38px;height:14px;border-top:1px solid #fff;border-right:1px solid #696969;box-shadow:inset -1px 0 0 #a0a0a0;background:#f0f0f0"></div>
<div class="t" style="left:163.7px;top:149px;">Surveys</div>
<div style="left:199px;top:145px;width:99px;height:14px;border-top:1px solid #fff;border-right:1px solid #696969;box-shadow:inset -1px 0 0 #a0a0a0;background:#f0f0f0"></div>
<div class="t" style="left:203.9px;top:149px;">Engineering Parameters</div>
<div style="left:299px;top:145px;width:53px;height:14px;border-top:1px solid #fff;border-right:1px solid #696969;box-shadow:inset -1px 0 0 #a0a0a0;background:#f0f0f0"></div>
<div class="t" style="left:303.5px;top:149px;">Drilling Data</div>
<div style="left:353px;top:145px;width:49px;height:14px;border-top:1px solid #fff;border-right:1px solid #696969;box-shadow:inset -1px 0 0 #a0a0a0;background:#f0f0f0"></div>
<div class="t" style="left:357.9px;top:149px;">Cementing</div>
<div style="left:10px;top:143px;width:149px;height:18px;border-top:1px solid #fff;border-left:1px solid #fff;border-right:1px solid #696969;box-shadow:inset -1px 0 0 #a0a0a0;background:#f0f0f0"></div>
<div class="t" style="left:15px;top:147.5px;">Drill String, Well Geometry and Fluids</div>
<div style="left:21px;top:174px;width:768px;height:488px;border:1px solid #fff;"></div>
<div style="left:20px;top:173px;width:768px;height:488px;border:1px solid #a8a8a8;"></div>
<div class="t" style="left:25px;top:169.5px;padding:0 1px;background:#f0f0f0;">Drill String</div>
<div style="left:29px;top:183px;width:753px;height:315px;background:#ababab;border-top:1px solid #696969;border-left:1px solid #696969;border-right:1px solid #fff;border-bottom:1px solid #fff;"></div>
<div style="left:30px;top:184px;width:14.399999999999999px;height:12.0px;background:#f0f0f0;box-shadow:inset 1px 1px 0 #fff;"></div>
<div style="left:45.4px;top:184px;width:50.199999999999996px;height:12.0px;background:#f0f0f0;box-shadow:inset 1px 1px 0 #fff;"></div>
<div style="left:96.6px;top:184px;width:35.650000000000006px;height:12.0px;background:#f0f0f0;box-shadow:inset 1px 1px 0 #fff;"></div>
<div style="left:133.25px;top:184px;width:32.05000000000001px;height:12.0px;background:#f0f0f0;box-shadow:inset 1px 1px 0 #fff;"></div>
<div style="left:166.3px;top:184px;width:46.0px;height:12.0px;background:#f0f0f0;box-shadow:inset 1px 1px 0 #fff;"></div>
<div style="left:213.3px;top:184px;width:43.69999999999999px;height:12.0px;background:#f0f0f0;box-shadow:inset 1px 1px 0 #fff;"></div>
<div style="left:258px;top:184px;width:59.5px;height:12.0px;background:#f0f0f0;box-shadow:inset 1px 1px 0 #fff;"></div>
<div style="left:318.5px;top:184px;width:118.80000000000001px;height:12.0px;background:#f0f0f0;box-shadow:inset 1px 1px 0 #fff;"></div>
<div style="left:438.3px;top:184px;width:49.19999999999999px;height:12.0px;background:#f0f0f0;box-shadow:inset 1px 1px 0 #fff;"></div>
<div style="left:488.5px;top:184px;width:70.89999999999998px;height:12.0px;background:#f0f0f0;box-shadow:inset 1px 1px 0 #fff;"></div>
<div style="left:560.4px;top:184px;width:61.60000000000002px;height:12.0px;background:#f0f0f0;box-shadow:inset 1px 1px 0 #fff;"></div>
<div style="left:30px;top:197.0px;width:14.399999999999999px;height:11.659999999999997px;background:#f0f0f0;box-shadow:inset 1px 1px 0 #fff;"></div>
<div style="left:45.4px;top:197.0px;width:50.199999999999996px;height:11.659999999999997px;background:#fff;box-shadow:inset 1px 1px 0 #fff;"></div>
<div style="left:96.6px;top:197.0px;width:35.650000000000006px;height:11.659999999999997px;background:#fff;box-shadow:inset 1px 1px 0 #fff;"></div>
<div style="left:133.25px;top:197.0px;width:32.05000000000001px;height:11.659999999999997px;background:#fff;box-shadow:inset 1px 1px 0 #fff;"></div>
<div style="left:166.3px;top:197.0px;width:46.0px;height:11.659999999999997px;background:#f0f0f0;box-shadow:inset 1px 1px 0 #f0f0f0;"></div>
<div style="left:213.3px;top:197.0px;width:43.69999999999999px;height:11.659999999999997px;background:#f0f0f0;box-shadow:inset 1px 1px 0 #f0f0f0;"></div>
<div style="left:258px;top:197.0px;width:59.5px;height:11.659999999999997px;background:#fff;box-shadow:inset 1px 1px 0 #fff;"></div>
<div style="left:318.5px;top:197.0px;width:118.80000000000001px;height:11.659999999999997px;background:#fff;box-shadow:inset 1px 1px 0 #fff;"></div>
<div style="left:438.3px;top:197.0px;width:49.19999999999999px;height:11.659999999999997px;background:#fff;box-shadow:inset 1px 1px 0 #fff;"></div>
<div style="left:488.5px;top:197.0px;width:70.89999999999998px;height:11.659999999999997px;background:#f0f0f0;box-shadow:inset 1px 1px 0 #f0f0f0;"></div>
<div style="left:560.4px;top:197.0px;width:61.60000000000002px;height:11.659999999999997px;background:#fff;box-shadow:inset 1px 1px 0 #fff;"></div>
<div style="left:30px;top:209.66px;width:14.399999999999999px;height:11.659999999999997px;background:#f0f0f0;box-shadow:inset 1px 1px 0 #fff;"></div>
<div style="left:45.4px;top:209.66px;width:50.199999999999996px;height:11.659999999999997px;background:#fff;box-shadow:inset 1px 1px 0 #fff;"></div>
<div style="left:96.6px;top:209.66px;width:35.650000000000006px;height:11.659999999999997px;background:#fff;box-shadow:inset 1px 1px 0 #fff;"></div>
<div style="left:133.25px;top:209.66px;width:32.05000000000001px;height:11.659999999999997px;background:#fff;box-shadow:inset 1px 1px 0 #fff;"></div>
<div style="left:166.3px;top:209.66px;width:46.0px;height:11.659999999999997px;background:#f0f0f0;box-shadow:inset 1px 1px 0 #f0f0f0;"></div>
<div style="left:213.3px;top:209.66px;width:43.69999999999999px;height:11.659999999999997px;background:#f0f0f0;box-shadow:inset 1px 1px 0 #f0f0f0;"></div>
<div style="left:258px;top:209.66px;width:59.5px;height:11.659999999999997px;background:#fff;box-shadow:inset 1px 1px 0 #fff;"></div>
<div style="left:318.5px;top:209.66px;width:118.80000000000001px;height:11.659999999999997px;background:#fff;box-shadow:inset 1px 1px 0 #fff;"></div>
<div style="left:438.3px;top:209.66px;width:49.19999999999999px;height:11.659999999999997px;background:#fff;box-shadow:inset 1px 1px 0 #fff;"></div>
<div style="left:488.5px;top:209.66px;width:70.89999999999998px;height:11.659999999999997px;background:#f0f0f0;box-shadow:inset 1px 1px 0 #f0f0f0;"></div>
<div style="left:560.4px;top:209.66px;width:61.60000000000002px;height:11.659999999999997px;background:#fff;box-shadow:inset 1px 1px 0 #fff;"></div>
<div style="left:30px;top:222.32px;width:14.399999999999999px;height:11.660000000000025px;background:#f0f0f0;box-shadow:inset 1px 1px 0 #fff;"></div>
<div style="left:45.4px;top:222.32px;width:50.199999999999996px;height:11.660000000000025px;background:#fff;box-shadow:inset 1px 1px 0 #fff;"></div>
<div style="left:96.6px;top:222.32px;width:35.650000000000006px;height:11.660000000000025px;background:#fff;box-shadow:inset 1px 1px 0 #fff;"></div>
<div style="left:133.25px;top:222.32px;width:32.05000000000001px;height:11.660000000000025px;background:#fff;box-shadow:inset 1px 1px 0 #fff;"></div>
<div style="left:166.3px;top:222.32px;width:46.0px;height:11.660000000000025px;background:#f0f0f0;box-shadow:inset 1px 1px 0 #f0f0f0;"></div>
<div style="left:213.3px;top:222.32px;width:43.69999999999999px;height:11.660000000000025px;background:#f0f0f0;box-shadow:inset 1px 1px 0 #f0f0f0;"></div>
<div style="left:258px;top:222.32px;width:59.5px;height:11.660000000000025px;background:#fff;box-shadow:inset 1px 1px 0 #fff;"></div>
<div style="left:318.5px;top:222.32px;width:118.80000000000001px;height:11.660000000000025px;background:#fff;box-shadow:inset 1px 1px 0 #fff;"></div>
<div style="left:438.3px;top:222.32px;width:49.19999999999999px;height:11.660000000000025px;background:#fff;box-shadow:inset 1px 1px 0 #fff;"></div>
<div style="left:488.5px;top:222.32px;width:70.89999999999998px;height:11.660000000000025px;background:#f0f0f0;box-shadow:inset 1px 1px 0 #f0f0f0;"></div>
<div style="left:560.4px;top:222.32px;width:61.60000000000002px;height:11.660000000000025px;background:#fff;box-shadow:inset 1px 1px 0 #fff;"></div>
<div style="left:30px;top:234.98000000000002px;width:14.399999999999999px;height:11.659999999999968px;background:#f0f0f0;box-shadow:inset 1px 1px 0 #fff;"></div>
<div style="left:45.4px;top:234.98000000000002px;width:50.199999999999996px;height:11.659999999999968px;background:#fff;box-shadow:inset 1px 1px 0 #fff;"></div>
<div style="left:96.6px;top:234.98000000000002px;width:35.650000000000006px;height:11.659999999999968px;background:#fff;box-shadow:inset 1px 1px 0 #fff;"></div>
<div style="left:133.25px;top:234.98000000000002px;width:32.05000000000001px;height:11.659999999999968px;background:#fff;box-shadow:inset 1px 1px 0 #fff;"></div>
<div style="left:166.3px;top:234.98000000000002px;width:46.0px;height:11.659999999999968px;background:#f0f0f0;box-shadow:inset 1px 1px 0 #f0f0f0;"></div>
<div style="left:213.3px;top:234.98000000000002px;width:43.69999999999999px;height:11.659999999999968px;background:#f0f0f0;box-shadow:inset 1px 1px 0 #f0f0f0;"></div>
<div style="left:258px;top:234.98000000000002px;width:59.5px;height:11.659999999999968px;background:#fff;box-shadow:inset 1px 1px 0 #fff;"></div>
<div style="left:318.5px;top:234.98000000000002px;width:118.80000000000001px;height:11.659999999999968px;background:#fff;box-shadow:inset 1px 1px 0 #fff;"></div>
<div style="left:438.3px;top:234.98000000000002px;width:49.19999999999999px;height:11.659999999999968px;background:#fff;box-shadow:inset 1px 1px 0 #fff;"></div>
<div style="left:488.5px;top:234.98000000000002px;width:70.89999999999998px;height:11.659999999999968px;background:#f0f0f0;box-shadow:inset 1px 1px 0 #f0f0f0;"></div>
<div style="left:560.4px;top:234.98000000000002px;width:61.60000000000002px;height:11.659999999999968px;background:#fff;box-shadow:inset 1px 1px 0 #fff;"></div>
<div style="left:30px;top:247.64px;width:14.399999999999999px;height:11.660000000000025px;background:#f0f0f0;box-shadow:inset 1px 1px 0 #fff;"></div>
<div style="left:45.4px;top:247.64px;width:50.199999999999996px;height:11.660000000000025px;background:#fff;box-shadow:inset 1px 1px 0 #fff;"></div>
<div style="left:96.6px;top:247.64px;width:35.650000000000006px;height:11.660000000000025px;background:#fff;box-shadow:inset 1px 1px 0 #fff;"></div>
<div style="left:133.25px;top:247.64px;width:32.05000000000001px;height:11.660000000000025px;background:#fff;box-shadow:inset 1px 1px 0 #fff;"></div>
<div style="left:166.3px;top:247.64px;width:46.0px;height:11.660000000000025px;background:#f0f0f0;box-shadow:inset 1px 1px 0 #f0f0f0;"></div>
<div style="left:213.3px;top:247.64px;width:43.69999999999999px;height:11.660000000000025px;background:#f0f0f0;box-shadow:inset 1px 1px 0 #f0f0f0;"></div>
<div style="left:258px;top:247.64px;width:59.5px;height:11.660000000000025px;background:#fff;box-shadow:inset 1px 1px 0 #fff;"></div>
<div style="left:318.5px;top:247.64px;width:118.80000000000001px;height:11.660000000000025px;background:#fff;box-shadow:inset 1px 1px 0 #fff;"></div>
<div style="left:438.3px;top:247.64px;width:49.19999999999999px;height:11.660000000000025px;background:#fff;box-shadow:inset 1px 1px 0 #fff;"></div>
<div style="left:488.5px;top:247.64px;width:70.89999999999998px;height:11.660000000000025px;background:#f0f0f0;box-shadow:inset 1px 1px 0 #f0f0f0;"></div>
<div style="left:560.4px;top:247.64px;width:61.60000000000002px;height:11.660000000000025px;background:#fff;box-shadow:inset 1px 1px 0 #fff;"></div>
<div style="left:30px;top:260.3px;width:14.399999999999999px;height:11.660000000000025px;background:#f0f0f0;box-shadow:inset 1px 1px 0 #fff;"></div>
<div style="left:45.4px;top:260.3px;width:50.199999999999996px;height:11.660000000000025px;background:#fff;box-shadow:inset 1px 1px 0 #fff;"></div>
<div style="left:96.6px;top:260.3px;width:35.650000000000006px;height:11.660000000000025px;background:#fff;box-shadow:inset 1px 1px 0 #fff;"></div>
<div style="left:133.25px;top:260.3px;width:32.05000000000001px;height:11.660000000000025px;background:#fff;box-shadow:inset 1px 1px 0 #fff;"></div>
<div style="left:166.3px;top:260.3px;width:46.0px;height:11.660000000000025px;background:#f0f0f0;box-shadow:inset 1px 1px 0 #f0f0f0;"></div>
<div style="left:213.3px;top:260.3px;width:43.69999999999999px;height:11.660000000000025px;background:#f0f0f0;box-shadow:inset 1px 1px 0 #f0f0f0;"></div>
<div style="left:258px;top:260.3px;width:59.5px;height:11.660000000000025px;background:#fff;box-shadow:inset 1px 1px 0 #fff;"></div>
<div style="left:318.5px;top:260.3px;width:118.80000000000001px;height:11.660000000000025px;background:#fff;box-shadow:inset 1px 1px 0 #fff;"></div>
<div style="left:438.3px;top:260.3px;width:49.19999999999999px;height:11.660000000000025px;background:#fff;box-shadow:inset 1px 1px 0 #fff;"></div>
<div style="left:488.5px;top:260.3px;width:70.89999999999998px;height:11.660000000000025px;background:#f0f0f0;box-shadow:inset 1px 1px 0 #f0f0f0;"></div>
<div style="left:560.4px;top:260.3px;width:61.60000000000002px;height:11.660000000000025px;background:#fff;box-shadow:inset 1px 1px 0 #fff;"></div>
<div style="left:30px;top:272.96000000000004px;width:14.399999999999999px;height:11.659999999999968px;background:#f0f0f0;box-shadow:inset 1px 1px 0 #fff;"></div>
<div style="left:45.4px;top:272.96000000000004px;width:50.199999999999996px;height:11.659999999999968px;background:#fff;box-shadow:inset 1px 1px 0 #fff;"></div>
<div style="left:96.6px;top:272.96000000000004px;width:35.650000000000006px;height:11.659999999999968px;background:#fff;box-shadow:inset 1px 1px 0 #fff;"></div>
<div style="left:133.25px;top:272.96000000000004px;width:32.05000000000001px;height:11.659999999999968px;background:#fff;box-shadow:inset 1px 1px 0 #fff;"></div>
<div style="left:166.3px;top:272.96000000000004px;width:46.0px;height:11.659999999999968px;background:#f0f0f0;box-shadow:inset 1px 1px 0 #f0f0f0;"></div>
<div style="left:213.3px;top:272.96000000000004px;width:43.69999999999999px;height:11.659999999999968px;background:#f0f0f0;box-shadow:inset 1px 1px 0 #f0f0f0;"></div>
<div style="left:258px;top:272.96000000000004px;width:59.5px;height:11.659999999999968px;background:#fff;box-shadow:inset 1px 1px 0 #fff;"></div>
<div style="left:318.5px;top:272.96000000000004px;width:118.80000000000001px;height:11.659999999999968px;background:#fff;box-shadow:inset 1px 1px 0 #fff;"></div>
<div style="left:438.3px;top:272.96000000000004px;width:49.19999999999999px;height:11.659999999999968px;background:#fff;box-shadow:inset 1px 1px 0 #fff;"></div>
<div style="left:488.5px;top:272.96000000000004px;width:70.89999999999998px;height:11.659999999999968px;background:#f0f0f0;box-shadow:inset 1px 1px 0 #f0f0f0;"></div>
<div style="left:560.4px;top:272.96000000000004px;width:61.60000000000002px;height:11.659999999999968px;background:#fff;box-shadow:inset 1px 1px 0 #fff;"></div>
<div style="left:30px;top:285.62px;width:14.399999999999999px;height:11.659999999999968px;background:#f0f0f0;box-shadow:inset 1px 1px 0 #fff;"></div>
<div style="left:45.4px;top:285.62px;width:50.199999999999996px;height:11.659999999999968px;background:#fff;box-shadow:inset 1px 1px 0 #fff;"></div>
<div style="left:96.6px;top:285.62px;width:35.650000000000006px;height:11.659999999999968px;background:#fff;box-shadow:inset 1px 1px 0 #fff;"></div>
<div style="left:133.25px;top:285.62px;width:32.05000000000001px;height:11.659999999999968px;background:#fff;box-shadow:inset 1px 1px 0 #fff;"></div>
<div style="left:166.3px;top:285.62px;width:46.0px;height:11.659999999999968px;background:#f0f0f0;box-shadow:inset 1px 1px 0 #f0f0f0;"></div>
<div style="left:213.3px;top:285.62px;width:43.69999999999999px;height:11.659999999999968px;background:#f0f0f0;box-shadow:inset 1px 1px 0 #f0f0f0;"></div>
<div style="left:258px;top:285.62px;width:59.5px;height:11.659999999999968px;background:#fff;box-shadow:inset 1px 1px 0 #fff;"></div>
<div style="left:318.5px;top:285.62px;width:118.80000000000001px;height:11.659999999999968px;background:#fff;box-shadow:inset 1px 1px 0 #fff;"></div>
<div style="left:438.3px;top:285.62px;width:49.19999999999999px;height:11.659999999999968px;background:#fff;box-shadow:inset 1px 1px 0 #fff;"></div>
<div style="left:488.5px;top:285.62px;width:70.89999999999998px;height:11.659999999999968px;background:#f0f0f0;box-shadow:inset 1px 1px 0 #f0f0f0;"></div>
<div style="left:560.4px;top:285.62px;width:61.60000000000002px;height:11.659999999999968px;background:#fff;box-shadow:inset 1px 1px 0 #fff;"></div>
<div style="left:44.4px;top:184px;width:1px;height:114.27999999999997px;background:#a0a0a0"></div>
<div style="left:95.6px;top:184px;width:1px;height:114.27999999999997px;background:#a0a0a0"></div>
<div style="left:132.25px;top:184px;width:1px;height:114.27999999999997px;background:#a0a0a0"></div>
<div style="left:165.3px;top:184px;width:1px;height:114.27999999999997px;background:#a0a0a0"></div>
<div style="left:212.3px;top:184px;width:1px;height:114.27999999999997px;background:#a0a0a0"></div>
<div style="left:257px;top:184px;width:1px;height:114.27999999999997px;background:#a0a0a0"></div>
<div style="left:317.5px;top:184px;width:1px;height:114.27999999999997px;background:#a0a0a0"></div>
<div style="left:437.3px;top:184px;width:1px;height:114.27999999999997px;background:#a0a0a0"></div>
<div style="left:487.5px;top:184px;width:1px;height:114.27999999999997px;background:#a0a0a0"></div>
<div style="left:559.4px;top:184px;width:1px;height:114.27999999999997px;background:#a0a0a0"></div>
<div style="left:30px;top:196.0px;width:593px;height:1px;background:#a0a0a0"></div>
<div style="left:30px;top:208.66px;width:593px;height:1px;background:#a0a0a0"></div>
<div style="left:30px;top:221.32px;width:593px;height:1px;background:#a0a0a0"></div>
<div style="left:30px;top:233.98000000000002px;width:593px;height:1px;background:#a0a0a0"></div>
<div style="left:30px;top:246.64px;width:593px;height:1px;background:#a0a0a0"></div>
<div style="left:30px;top:259.3px;width:593px;height:1px;background:#a0a0a0"></div>
<div style="left:30px;top:271.96000000000004px;width:593px;height:1px;background:#a0a0a0"></div>
<div style="left:30px;top:284.62px;width:593px;height:1px;background:#a0a0a0"></div>
<div style="left:622px;top:184px;width:1px;height:115.27999999999997px;background:#696969"></div>
<div style="left:30px;top:297.28px;width:593px;height:1px;background:#696969"></div>
<div class="t" style="left:32.5px;top:185.8px;width:9.399999999999999px;text-align:center;overflow:hidden"></div>
<div class="t" style="left:47.9px;top:185.8px;width:45.199999999999996px;text-align:left;overflow:hidden">Description</div>
<div class="t" style="left:99.1px;top:185.8px;width:30.650000000000006px;text-align:center;overflow:hidden">OD (in)</div>
<div class="t" style="left:135.75px;top:185.8px;width:27.05000000000001px;text-align:center;overflow:hidden">ID (in)</div>
<div class="t" style="left:168.8px;top:185.8px;width:41.0px;text-align:center;overflow:hidden">TJ OD (in)</div>
<div class="t" style="left:215.8px;top:185.8px;width:38.69999999999999px;text-align:center;overflow:hidden">TJ ID (in)</div>
<div class="t" style="left:260.5px;top:185.8px;width:54.5px;text-align:center;overflow:hidden">Weight (lb/ft)</div>
<div class="t" style="left:321.0px;top:185.8px;width:113.80000000000001px;text-align:center;overflow:hidden">Component</div>
<div class="t" style="left:440.8px;top:185.8px;width:44.19999999999999px;text-align:center;overflow:hidden">Length (ft)</div>
<div class="t" style="left:491.0px;top:185.8px;width:65.89999999999998px;text-align:center;overflow:hidden">Total Length (ft)</div>
<div class="t" style="left:562.9px;top:185.8px;width:56.60000000000002px;text-align:center;overflow:hidden">Non-Magnetic</div>
<div class="t" style="left:32.5px;top:198.63px;width:9.399999999999999px;text-align:left;overflow:hidden">1</div>
<div class="t" style="left:47.9px;top:198.63px;width:45.199999999999996px;text-align:left;overflow:hidden">Bit</div>
<div class="t" style="left:99.1px;top:198.63px;width:30.650000000000006px;text-align:center;overflow:hidden">12.250</div>
<div class="t" style="left:135.75px;top:198.63px;width:27.05000000000001px;text-align:center;overflow:hidden">2.000</div>
<div class="t" style="left:260.5px;top:198.63px;width:54.5px;text-align:center;overflow:hidden">389.77</div>
<div class="t" style="left:321.0px;top:198.63px;width:100.80000000000001px;text-align:center;overflow:hidden">Bit</div>
<div class="t" style="left:440.8px;top:198.63px;width:44.19999999999999px;text-align:center;overflow:hidden">0.500</div>
<div class="t" style="left:491.0px;top:198.63px;width:65.89999999999998px;text-align:center;overflow:hidden">0.50</div>
<div class="t" style="left:32.5px;top:211.29000000000002px;width:9.399999999999999px;text-align:left;overflow:hidden">2</div>
<div class="t" style="left:47.9px;top:211.29000000000002px;width:45.199999999999996px;text-align:left;overflow:hidden">Collar</div>
<div class="t" style="left:99.1px;top:211.29000000000002px;width:30.650000000000006px;text-align:center;overflow:hidden">8.000</div>
<div class="t" style="left:135.75px;top:211.29000000000002px;width:27.05000000000001px;text-align:center;overflow:hidden">2.813</div>
<div class="t" style="left:260.5px;top:211.29000000000002px;width:54.5px;text-align:center;overflow:hidden">149.67</div>
<div class="t" style="left:321.0px;top:211.29000000000002px;width:100.80000000000001px;text-align:center;overflow:hidden">Drill Collar</div>
<div class="t" style="left:440.8px;top:211.29000000000002px;width:44.19999999999999px;text-align:center;overflow:hidden">4.000</div>
<div class="t" style="left:491.0px;top:211.29000000000002px;width:65.89999999999998px;text-align:center;overflow:hidden">4.50</div>
<div class="t" style="left:32.5px;top:223.95000000000002px;width:9.399999999999999px;text-align:left;overflow:hidden">3</div>
<div class="t" style="left:47.9px;top:223.95000000000002px;width:45.199999999999996px;text-align:left;overflow:hidden">Stab</div>
<div class="t" style="left:99.1px;top:223.95000000000002px;width:30.650000000000006px;text-align:center;overflow:hidden">8.000</div>
<div class="t" style="left:135.75px;top:223.95000000000002px;width:27.05000000000001px;text-align:center;overflow:hidden">2.813</div>
<div class="t" style="left:260.5px;top:223.95000000000002px;width:54.5px;text-align:center;overflow:hidden">149.67</div>
<div class="t" style="left:321.0px;top:223.95000000000002px;width:100.80000000000001px;text-align:center;overflow:hidden">Stabilizer</div>
<div class="t" style="left:440.8px;top:223.95000000000002px;width:44.19999999999999px;text-align:center;overflow:hidden">5.000</div>
<div class="t" style="left:491.0px;top:223.95000000000002px;width:65.89999999999998px;text-align:center;overflow:hidden">9.50</div>
<div class="t" style="left:32.5px;top:236.61px;width:9.399999999999999px;text-align:left;overflow:hidden">4</div>
<div class="t" style="left:47.9px;top:236.61px;width:45.199999999999996px;text-align:left;overflow:hidden">Collar</div>
<div class="t" style="left:99.1px;top:236.61px;width:30.650000000000006px;text-align:center;overflow:hidden">8.000</div>
<div class="t" style="left:135.75px;top:236.61px;width:27.05000000000001px;text-align:center;overflow:hidden">2.813</div>
<div class="t" style="left:260.5px;top:236.61px;width:54.5px;text-align:center;overflow:hidden">149.67</div>
<div class="t" style="left:321.0px;top:236.61px;width:100.80000000000001px;text-align:center;overflow:hidden">Drill Collar</div>
<div class="t" style="left:440.8px;top:236.61px;width:44.19999999999999px;text-align:center;overflow:hidden">58.000</div>
<div class="t" style="left:491.0px;top:236.61px;width:65.89999999999998px;text-align:center;overflow:hidden">67.50</div>
<div class="t" style="left:32.5px;top:249.27px;width:9.399999999999999px;text-align:left;overflow:hidden">5</div>
<div class="t" style="left:47.9px;top:249.27px;width:45.199999999999996px;text-align:left;overflow:hidden">Stab</div>
<div class="t" style="left:99.1px;top:249.27px;width:30.650000000000006px;text-align:center;overflow:hidden">8.000</div>
<div class="t" style="left:135.75px;top:249.27px;width:27.05000000000001px;text-align:center;overflow:hidden">2.813</div>
<div class="t" style="left:260.5px;top:249.27px;width:54.5px;text-align:center;overflow:hidden">149.67</div>
<div class="t" style="left:321.0px;top:249.27px;width:100.80000000000001px;text-align:center;overflow:hidden">Stabilizer</div>
<div class="t" style="left:440.8px;top:249.27px;width:44.19999999999999px;text-align:center;overflow:hidden">5.000</div>
<div class="t" style="left:491.0px;top:249.27px;width:65.89999999999998px;text-align:center;overflow:hidden">72.50</div>
<div class="t" style="left:32.5px;top:261.93px;width:9.399999999999999px;text-align:left;overflow:hidden">6</div>
<div class="t" style="left:47.9px;top:261.93px;width:45.199999999999996px;text-align:left;overflow:hidden">Collar</div>
<div class="t" style="left:99.1px;top:261.93px;width:30.650000000000006px;text-align:center;overflow:hidden">8.000</div>
<div class="t" style="left:135.75px;top:261.93px;width:27.05000000000001px;text-align:center;overflow:hidden">2.813</div>
<div class="t" style="left:260.5px;top:261.93px;width:54.5px;text-align:center;overflow:hidden">149.67</div>
<div class="t" style="left:321.0px;top:261.93px;width:100.80000000000001px;text-align:center;overflow:hidden">Drill Collar</div>
<div class="t" style="left:440.8px;top:261.93px;width:44.19999999999999px;text-align:center;overflow:hidden">28.000</div>
<div class="t" style="left:491.0px;top:261.93px;width:65.89999999999998px;text-align:center;overflow:hidden">100.50</div>
<div class="t" style="left:32.5px;top:274.59000000000003px;width:9.399999999999999px;text-align:left;overflow:hidden">7</div>
<div class="t" style="left:47.9px;top:274.59000000000003px;width:45.199999999999996px;text-align:left;overflow:hidden">Stab</div>
<div class="t" style="left:99.1px;top:274.59000000000003px;width:30.650000000000006px;text-align:center;overflow:hidden">8.000</div>
<div class="t" style="left:135.75px;top:274.59000000000003px;width:27.05000000000001px;text-align:center;overflow:hidden">2.813</div>
<div class="t" style="left:260.5px;top:274.59000000000003px;width:54.5px;text-align:center;overflow:hidden">149.67</div>
<div class="t" style="left:321.0px;top:274.59000000000003px;width:100.80000000000001px;text-align:center;overflow:hidden">Stabilizer</div>
<div class="t" style="left:440.8px;top:274.59000000000003px;width:44.19999999999999px;text-align:center;overflow:hidden">5.000</div>
<div class="t" style="left:491.0px;top:274.59000000000003px;width:65.89999999999998px;text-align:center;overflow:hidden">105.50</div>
<div class="t" style="left:32.5px;top:287.25px;width:9.399999999999999px;text-align:left;overflow:hidden">8</div>
<div class="t" style="left:47.9px;top:287.25px;width:45.199999999999996px;text-align:left;overflow:hidden">Collar</div>
<div class="t" style="left:99.1px;top:287.25px;width:30.650000000000006px;text-align:center;overflow:hidden">8.000</div>
<div class="t" style="left:135.75px;top:287.25px;width:27.05000000000001px;text-align:center;overflow:hidden">2.813</div>
<div class="t" style="left:260.5px;top:287.25px;width:54.5px;text-align:center;overflow:hidden">149.67</div>
<div class="t" style="left:321.0px;top:287.25px;width:100.80000000000001px;text-align:center;overflow:hidden">Drill Collar</div>
<div class="t" style="left:440.8px;top:287.25px;width:44.19999999999999px;text-align:center;overflow:hidden">44.000</div>
<div class="t" style="left:491.0px;top:287.25px;width:65.89999999999998px;text-align:center;overflow:hidden">149.50</div>
<div style="left:423.3px;top:197.0px;width:13px;height:10.659999999999997px;background:#f0f0f0;border-right:1px solid #555;border-bottom:1px solid #555;box-shadow:inset 1px 1px 0 #fff"></div>
<div style="left:427.8px;top:201.32999999999998px;width:0;height:0;border-left:2.5px solid transparent;border-right:2.5px solid transparent;border-top:3px solid #000"></div>
<div style="left:423.3px;top:209.66px;width:13px;height:10.659999999999997px;background:#f0f0f0;border-right:1px solid #555;border-bottom:1px solid #555;box-shadow:inset 1px 1px 0 #fff"></div>
<div style="left:427.8px;top:213.99px;width:0;height:0;border-left:2.5px solid transparent;border-right:2.5px solid transparent;border-top:3px solid #000"></div>
<div style="left:423.3px;top:222.32px;width:13px;height:10.660000000000025px;background:#f0f0f0;border-right:1px solid #555;border-bottom:1px solid #555;box-shadow:inset 1px 1px 0 #fff"></div>
<div style="left:427.8px;top:226.65px;width:0;height:0;border-left:2.5px solid transparent;border-right:2.5px solid transparent;border-top:3px solid #000"></div>
<div style="left:423.3px;top:234.98000000000002px;width:13px;height:10.659999999999968px;background:#f0f0f0;border-right:1px solid #555;border-bottom:1px solid #555;box-shadow:inset 1px 1px 0 #fff"></div>
<div style="left:427.8px;top:239.31px;width:0;height:0;border-left:2.5px solid transparent;border-right:2.5px solid transparent;border-top:3px solid #000"></div>
<div style="left:423.3px;top:247.64px;width:13px;height:10.660000000000025px;background:#f0f0f0;border-right:1px solid #555;border-bottom:1px solid #555;box-shadow:inset 1px 1px 0 #fff"></div>
<div style="left:427.8px;top:251.97px;width:0;height:0;border-left:2.5px solid transparent;border-right:2.5px solid transparent;border-top:3px solid #000"></div>
<div style="left:423.3px;top:260.3px;width:13px;height:10.660000000000025px;background:#f0f0f0;border-right:1px solid #555;border-bottom:1px solid #555;box-shadow:inset 1px 1px 0 #fff"></div>
<div style="left:427.8px;top:264.63px;width:0;height:0;border-left:2.5px solid transparent;border-right:2.5px solid transparent;border-top:3px solid #000"></div>
<div style="left:423.3px;top:272.96000000000004px;width:13px;height:10.659999999999968px;background:#f0f0f0;border-right:1px solid #555;border-bottom:1px solid #555;box-shadow:inset 1px 1px 0 #fff"></div>
<div style="left:427.8px;top:277.29px;width:0;height:0;border-left:2.5px solid transparent;border-right:2.5px solid transparent;border-top:3px solid #000"></div>
<div style="left:423.3px;top:285.62px;width:13px;height:10.659999999999968px;background:#f0f0f0;border-right:1px solid #555;border-bottom:1px solid #555;box-shadow:inset 1px 1px 0 #fff"></div>
<div style="left:427.8px;top:289.95px;width:0;height:0;border-left:2.5px solid transparent;border-right:2.5px solid transparent;border-top:3px solid #000"></div>
<div style="left:586px;top:198px;width:7px;height:7px;border:1px solid #8f8f8f;background:#fff;"></div>
<div style="left:586px;top:210px;width:7px;height:7px;border:1px solid #8f8f8f;background:#fff;"></div>
<div style="left:586px;top:223px;width:7px;height:7px;border:1px solid #8f8f8f;background:#fff;"></div>
<div style="left:586px;top:236px;width:7px;height:7px;border:1px solid #8f8f8f;background:#fff;"></div>
<div style="left:586px;top:248px;width:7px;height:7px;border:1px solid #8f8f8f;background:#fff;"></div>
<div style="left:586px;top:261px;width:7px;height:7px;border:1px solid #8f8f8f;background:#fff;"></div>
<div style="left:586px;top:274px;width:7px;height:7px;border:1px solid #8f8f8f;background:#fff;"></div>
<div style="left:586px;top:286px;width:7px;height:7px;border:1px solid #8f8f8f;background:#fff;"></div>
<div class="t" style="left:31.3px;top:509px;">Component Details</div>
<div class="t" style="left:146.6px;top:509px;">BHA Weight (Buoyed) 19.61 klbs (Vertical)</div>
<div class="tb" style="left:571px;top:505px;width:32px;height:15px;line-height:15px;background:#fff;color:#000;text-align:center;padding:0 2px;box-sizing:content-box;width:28px">8</div>
<div style="left:607.5px;top:508.5px;width:7px;height:7px;border-top:1px solid #6a6a6a;border-left:1px solid #6a6a6a;border-right:1px solid #e8e8e8;border-bottom:1px solid #e8e8e8;background:#fff;box-shadow:inset 1px 1px 0 #c8c8c8;"></div>
<div class="t" style="left:621px;top:510px;">Last BHA Item</div>
<div class="btn" style="left:707px;top:505px;width:74.5px;height:15.5px;line-height:15.5px;">Adjust Length</div>
<div style="left:30px;top:526.3px;width:752px;height:100.70000000000005px;background:#ababab;border-top:1px solid #696969;border-left:1px solid #696969;border-right:1px solid #fff;border-bottom:1px solid #fff;"></div>
<div style="left:31px;top:527.3px;width:131.5px;height:11.67999999999995px;background:#f0f0f0;box-shadow:inset 1px 1px 0 #fff;"></div>
<div style="left:163.5px;top:527.3px;width:62.30000000000001px;height:11.67999999999995px;background:#fff;box-shadow:inset 1px 1px 0 #fff;"></div>
<div style="left:31px;top:539.9799999999999px;width:131.5px;height:11.680000000000064px;background:#f0f0f0;box-shadow:inset 1px 1px 0 #fff;"></div>
<div style="left:163.5px;top:539.9799999999999px;width:62.30000000000001px;height:11.680000000000064px;background:#fff;box-shadow:inset 1px 1px 0 #fff;"></div>
<div style="left:31px;top:552.66px;width:131.5px;height:11.67999999999995px;background:#f0f0f0;box-shadow:inset 1px 1px 0 #fff;"></div>
<div style="left:163.5px;top:552.66px;width:62.30000000000001px;height:11.67999999999995px;background:#fff;box-shadow:inset 1px 1px 0 #fff;"></div>
<div style="left:31px;top:565.3399999999999px;width:131.5px;height:11.680000000000064px;background:#f0f0f0;box-shadow:inset 1px 1px 0 #fff;"></div>
<div style="left:163.5px;top:565.3399999999999px;width:62.30000000000001px;height:11.680000000000064px;background:#fff;box-shadow:inset 1px 1px 0 #fff;"></div>
<div style="left:31px;top:578.02px;width:131.5px;height:11.67999999999995px;background:#f0f0f0;box-shadow:inset 1px 1px 0 #fff;"></div>
<div style="left:163.5px;top:578.02px;width:62.30000000000001px;height:11.67999999999995px;background:#fff;box-shadow:inset 1px 1px 0 #fff;"></div>
<div style="left:31px;top:590.6999999999999px;width:131.5px;height:11.680000000000064px;background:#f0f0f0;box-shadow:inset 1px 1px 0 #fff;"></div>
<div style="left:163.5px;top:590.6999999999999px;width:62.30000000000001px;height:11.680000000000064px;background:#fff;box-shadow:inset 1px 1px 0 #fff;"></div>
<div style="left:31px;top:603.38px;width:131.5px;height:11.67999999999995px;background:#f0f0f0;box-shadow:inset 1px 1px 0 #fff;"></div>
<div style="left:163.5px;top:603.38px;width:62.30000000000001px;height:11.67999999999995px;background:#fff;box-shadow:inset 1px 1px 0 #fff;"></div>
<div style="left:31px;top:616.06px;width:131.5px;height:11.680000000000064px;background:#f0f0f0;box-shadow:inset 1px 1px 0 #fff;"></div>
<div style="left:163.5px;top:616.06px;width:62.30000000000001px;height:11.680000000000064px;background:#fff;box-shadow:inset 1px 1px 0 #fff;"></div>
<div style="left:162.5px;top:527.3px;width:1px;height:101.44000000000005px;background:#a0a0a0"></div>
<div style="left:31px;top:538.9799999999999px;width:195.8px;height:1px;background:#a0a0a0"></div>
<div style="left:31px;top:551.66px;width:195.8px;height:1px;background:#a0a0a0"></div>
<div style="left:31px;top:564.3399999999999px;width:195.8px;height:1px;background:#a0a0a0"></div>
<div style="left:31px;top:577.02px;width:195.8px;height:1px;background:#a0a0a0"></div>
<div style="left:31px;top:589.6999999999999px;width:195.8px;height:1px;background:#a0a0a0"></div>
<div style="left:31px;top:602.38px;width:195.8px;height:1px;background:#a0a0a0"></div>
<div style="left:31px;top:615.06px;width:195.8px;height:1px;background:#a0a0a0"></div>
<div style="left:225.8px;top:527.3px;width:1px;height:102.44000000000005px;background:#696969"></div>
<div style="left:31px;top:627.74px;width:195.8px;height:1px;background:#696969"></div>
<div class="t" style="left:33.5px;top:528.9399999999998px;width:126.5px;text-align:left;overflow:hidden">SN</div>
<div class="t" style="left:33.5px;top:541.6199999999999px;width:126.5px;text-align:left;overflow:hidden">Gauge OD (in)</div>
<div class="t" style="left:33.5px;top:554.3px;width:126.5px;text-align:left;overflow:hidden">TFA (sq in)</div>
<div class="t" style="left:33.5px;top:566.9799999999999px;width:126.5px;text-align:left;overflow:hidden">Connection Top</div>
<div class="t" style="left:33.5px;top:579.6599999999999px;width:126.5px;text-align:left;overflow:hidden">Bit Formation Index (0-1)</div>
<div class="t" style="left:33.5px;top:592.3399999999999px;width:126.5px;text-align:left;overflow:hidden">Bit Type</div>
<div class="t" style="left:33.5px;top:605.02px;width:126.5px;text-align:left;overflow:hidden">Tensile Yield (klbs)</div>
<div class="t" style="left:33.5px;top:617.6999999999999px;width:126.5px;text-align:left;overflow:hidden">Torsional Yield (kftlbs)</div>
<div class="btn" style="left:29.7px;top:637.5px;width:100.5px;height:15.5px;line-height:15.5px;">Insert Before</div>
<div class="btn" style="left:164.7px;top:637.5px;width:100.5px;height:15.5px;line-height:15.5px;">Insert After</div>
<div class="btn" style="left:300.6px;top:637.5px;width:100.5px;height:15.5px;line-height:15.5px;">Move Up</div>
<div class="btn" style="left:434.4px;top:637.5px;width:100.5px;height:15.5px;line-height:15.5px;">Move Down</div>
<div class="btn" style="left:570.3px;top:637.5px;width:100.5px;height:15.5px;line-height:15.5px;">Delete</div>
<div style="left:797px;top:174px;width:371px;height:212px;border:1px solid #fff;"></div>
<div style="left:796px;top:173px;width:371px;height:212px;border:1px solid #a8a8a8;"></div>
<div class="t" style="left:802px;top:169.5px;padding:0 1px;background:#f0f0f0;">Well Geometry</div>
<div style="left:806px;top:183px;width:355px;height:174.5px;background:#ababab;border-top:1px solid #696969;border-left:1px solid #696969;border-right:1px solid #fff;border-bottom:1px solid #fff;"></div>
<div style="left:807px;top:184px;width:26px;height:12.300000000000011px;background:#f0f0f0;box-shadow:inset 1px 1px 0 #fff;"></div>
<div style="left:834px;top:184px;width:74px;height:12.300000000000011px;background:#f0f0f0;box-shadow:inset 1px 1px 0 #fff;"></div>
<div style="left:909px;top:184px;width:58.5px;height:12.300000000000011px;background:#f0f0f0;box-shadow:inset 1px 1px 0 #fff;"></div>
<div style="left:968.5px;top:184px;width:58.0px;height:12.300000000000011px;background:#f0f0f0;box-shadow:inset 1px 1px 0 #fff;"></div>
<div style="left:1027.5px;top:184px;width:50.799999999999955px;height:12.300000000000011px;background:#f0f0f0;box-shadow:inset 1px 1px 0 #fff;"></div>
<div style="left:1079.3px;top:184px;width:50.90000000000009px;height:12.300000000000011px;background:#f0f0f0;box-shadow:inset 1px 1px 0 #fff;"></div>
<div style="left:807px;top:197.3px;width:26px;height:12.0px;background:#f0f0f0;box-shadow:inset 1px 1px 0 #fff;"></div>
<div style="left:834px;top:197.3px;width:74px;height:12.0px;background:#fff;box-shadow:inset 1px 1px 0 #fff;"></div>
<div style="left:909px;top:197.3px;width:58.5px;height:12.0px;background:#fff;box-shadow:inset 1px 1px 0 #fff;"></div>
<div style="left:968.5px;top:197.3px;width:58.0px;height:12.0px;background:#f0f0f0;box-shadow:inset 1px 1px 0 #f0f0f0;"></div>
<div style="left:1027.5px;top:197.3px;width:50.799999999999955px;height:12.0px;background:#fff;box-shadow:inset 1px 1px 0 #fff;"></div>
<div style="left:1079.3px;top:197.3px;width:50.90000000000009px;height:12.0px;background:#fff;box-shadow:inset 1px 1px 0 #fff;"></div>
<div style="left:807px;top:210.3px;width:26px;height:11.699999999999989px;background:#f0f0f0;box-shadow:inset 1px 1px 0 #fff;"></div>
<div style="left:834px;top:210.3px;width:74px;height:11.699999999999989px;background:#fff;box-shadow:inset 1px 1px 0 #fff;"></div>
<div style="left:909px;top:210.3px;width:58.5px;height:11.699999999999989px;background:#fff;box-shadow:inset 1px 1px 0 #fff;"></div>
<div style="left:968.5px;top:210.3px;width:58.0px;height:11.699999999999989px;background:#f0f0f0;box-shadow:inset 1px 1px 0 #f0f0f0;"></div>
<div style="left:1027.5px;top:210.3px;width:50.799999999999955px;height:11.699999999999989px;background:#fff;box-shadow:inset 1px 1px 0 #fff;"></div>
<div style="left:1079.3px;top:210.3px;width:50.90000000000009px;height:11.699999999999989px;background:#fff;box-shadow:inset 1px 1px 0 #fff;"></div>
<div style="left:833px;top:184px;width:1px;height:39px;background:#a0a0a0"></div>
<div style="left:908px;top:184px;width:1px;height:39px;background:#a0a0a0"></div>
<div style="left:967.5px;top:184px;width:1px;height:39px;background:#a0a0a0"></div>
<div style="left:1026.5px;top:184px;width:1px;height:39px;background:#a0a0a0"></div>
<div style="left:1078.3px;top:184px;width:1px;height:39px;background:#a0a0a0"></div>
<div style="left:807px;top:196.3px;width:324.20000000000005px;height:1px;background:#a0a0a0"></div>
<div style="left:807px;top:209.3px;width:324.20000000000005px;height:1px;background:#a0a0a0"></div>
<div style="left:1130.2px;top:184px;width:1px;height:40px;background:#696969"></div>
<div style="left:807px;top:222px;width:324.20000000000005px;height:1px;background:#696969"></div>
<div class="t" style="left:809.5px;top:185.95000000000002px;width:21.0px;text-align:center;overflow:hidden"></div>
<div class="t" style="left:836.5px;top:185.95000000000002px;width:69.0px;text-align:center;overflow:hidden">Type</div>
<div class="t" style="left:911.5px;top:185.95000000000002px;width:53.5px;text-align:center;overflow:hidden">MD (ft)</div>
<div class="t" style="left:971.0px;top:185.95000000000002px;width:53.0px;text-align:center;overflow:hidden">TVD (ft)</div>
<div class="t" style="left:1030.0px;top:185.95000000000002px;width:45.799999999999955px;text-align:center;overflow:hidden">ID (in)</div>
<div class="t" style="left:1081.8px;top:185.95000000000002px;width:45.90000000000009px;text-align:center;overflow:hidden">OD (in)</div>
<div class="t" style="left:809.5px;top:199.10000000000002px;width:21.0px;text-align:right;overflow:hidden">1</div>
<div class="t" style="left:809.5px;top:211.95000000000002px;width:21.0px;text-align:right;overflow:hidden">2</div>
<div class="t" style="left:836.5px;top:199.10000000000002px;width:56.0px;text-align:center;overflow:hidden">Open Hole</div>
<div class="t" style="left:911.5px;top:199.10000000000002px;width:53.5px;text-align:center;overflow:hidden">1000.00</div>
<div class="t" style="left:971.0px;top:199.10000000000002px;width:53.0px;text-align:center;overflow:hidden">1000.000</div>
<div class="t" style="left:1030.0px;top:199.10000000000002px;width:45.799999999999955px;text-align:center;overflow:hidden">12.250</div>
<div class="t" style="left:1081.8px;top:199.10000000000002px;width:45.90000000000009px;text-align:center;overflow:hidden">12.25</div>
<div style="left:894px;top:197.3px;width:13px;height:11.0px;background:#f0f0f0;border-right:1px solid #555;border-bottom:1px solid #555;box-shadow:inset 1px 1px 0 #fff"></div>
<div style="left:898.5px;top:201.8px;width:0;height:0;border-left:2.5px solid transparent;border-right:2.5px solid transparent;border-top:3px solid #000"></div>
<div style="left:894px;top:210.3px;width:13px;height:10.699999999999989px;background:#f0f0f0;border-right:1px solid #555;border-bottom:1px solid #555;box-shadow:inset 1px 1px 0 #fff"></div>
<div style="left:898.5px;top:214.65px;width:0;height:0;border-left:2.5px solid transparent;border-right:2.5px solid transparent;border-top:3px solid #000"></div>
<div class="btn" style="left:806px;top:364px;width:69.5px;height:16px;line-height:16px;">Insert Before</div>
<div class="btn" style="left:877.7px;top:364px;width:69.5px;height:16px;line-height:16px;">Insert After</div>
<div class="btn" style="left:949.7px;top:364px;width:69.5px;height:16px;line-height:16px;">Delete</div>
<div style="left:797px;top:401px;width:371px;height:261px;border:1px solid #fff;"></div>
<div style="left:796px;top:400px;width:371px;height:261px;border:1px solid #a8a8a8;"></div>
<div class="t" style="left:801.5px;top:396.5px;padding:0 1px;background:#f0f0f0;">Fluid properties</div>
<div style="left:803px;top:413px;width:348px;height:135px;border:1px solid #fff;"></div>
<div style="left:802px;top:412px;width:348px;height:135px;border:1px solid #a8a8a8;"></div>
<div class="t" style="left:863.8px;top:422.5px;">Mud Weight (ppg)</div>
<div class="tb" style="left:938px;top:420px;width:41px;height:15px;line-height:15px;background:#fff;color:#000;text-align:center;padding:0 2px;box-sizing:content-box;width:37px">8.4</div>
<div class="btn" style="left:807px;top:441.3px;width:74px;height:15.5px;line-height:15.5px;">Add Fluid</div>
<div class="btn" style="left:807px;top:462.2px;width:74px;height:15.5px;line-height:15.5px;">Fluid Library</div>
<div class="t" style="left:919.5px;top:444px;">PV</div>
<div class="tb" style="left:938px;top:441.3px;width:41px;height:15.5px;line-height:15.5px;background:#fff;color:#000;text-align:left;padding:0 2px;box-sizing:content-box;width:37px"></div>
<div class="t" style="left:919.5px;top:464.5px;">YP</div>
<div class="tb" style="left:938px;top:462.2px;width:41px;height:15.5px;line-height:15.5px;background:#fff;color:#000;text-align:left;padding:0 2px;box-sizing:content-box;width:37px"></div>
<div class="tb" style="left:808.5px;top:493.7px;width:168px;height:13.5px;background:#fff"></div>
<div style="left:962px;top:495px;width:13px;height:12px;background:#f0f0f0;border-right:1px solid #555;border-bottom:1px solid #555;box-shadow:inset 1px 1px 0 #fff"></div>
<div style="left:966px;top:500px;width:0;height:0;border-left:3px solid transparent;border-right:3px solid transparent;border-top:3.5px solid #000"></div>
<div style="left:816px;top:523.3px;width:7px;height:7px;border-top:1px solid #6a6a6a;border-left:1px solid #6a6a6a;border-right:1px solid #e8e8e8;border-bottom:1px solid #e8e8e8;background:#fff;box-shadow:inset 1px 1px 0 #c8c8c8;"></div>
<div class="t" style="left:830px;top:524.5px;">User Defined N and K</div>
<div style="left:986px;top:418px;width:155px;height:118px;background:#ababab;border-top:1px solid #696969;border-left:1px solid #696969;border-right:1px solid #fff;border-bottom:1px solid #fff;"></div>
<div style="left:987px;top:419px;width:50.40000000000009px;height:12.399999999999977px;background:#f0f0f0;box-shadow:inset 1px 1px 0 #fff;"></div>
<div style="left:1038.4px;top:419px;width:103.09999999999991px;height:12.399999999999977px;background:#fff;box-shadow:inset 1px 1px 0 #fff;"></div>
<div style="left:987px;top:432.4px;width:50.40000000000009px;height:11.660000000000025px;background:#f0f0f0;box-shadow:inset 1px 1px 0 #fff;"></div>
<div style="left:1038.4px;top:432.4px;width:103.09999999999991px;height:11.660000000000025px;background:#fff;box-shadow:inset 1px 1px 0 #fff;"></div>
<div style="left:987px;top:445.06px;width:50.40000000000009px;height:11.659999999999968px;background:#f0f0f0;box-shadow:inset 1px 1px 0 #fff;"></div>
<div style="left:1038.4px;top:445.06px;width:103.09999999999991px;height:11.659999999999968px;background:#fff;box-shadow:inset 1px 1px 0 #fff;"></div>
<div style="left:987px;top:457.71999999999997px;width:50.40000000000009px;height:11.660000000000025px;background:#f0f0f0;box-shadow:inset 1px 1px 0 #fff;"></div>
<div style="left:1038.4px;top:457.71999999999997px;width:103.09999999999991px;height:11.660000000000025px;background:#fff;box-shadow:inset 1px 1px 0 #fff;"></div>
<div style="left:987px;top:470.38px;width:50.40000000000009px;height:11.659999999999968px;background:#f0f0f0;box-shadow:inset 1px 1px 0 #fff;"></div>
<div style="left:1038.4px;top:470.38px;width:103.09999999999991px;height:11.659999999999968px;background:#fff;box-shadow:inset 1px 1px 0 #fff;"></div>
<div style="left:987px;top:483.03999999999996px;width:50.40000000000009px;height:11.660000000000025px;background:#f0f0f0;box-shadow:inset 1px 1px 0 #fff;"></div>
<div style="left:1038.4px;top:483.03999999999996px;width:103.09999999999991px;height:11.660000000000025px;background:#fff;box-shadow:inset 1px 1px 0 #fff;"></div>
<div style="left:987px;top:495.7px;width:50.40000000000009px;height:11.660000000000025px;background:#f0f0f0;box-shadow:inset 1px 1px 0 #fff;"></div>
<div style="left:1038.4px;top:495.7px;width:103.09999999999991px;height:11.660000000000025px;background:#f0f0f0;box-shadow:inset 1px 1px 0 #f0f0f0;"></div>
<div style="left:987px;top:508.36px;width:50.40000000000009px;height:11.659999999999968px;background:#f0f0f0;box-shadow:inset 1px 1px 0 #fff;"></div>
<div style="left:1038.4px;top:508.36px;width:103.09999999999991px;height:11.659999999999968px;background:#f0f0f0;box-shadow:inset 1px 1px 0 #f0f0f0;"></div>
<div style="left:1037.4px;top:419px;width:1px;height:102.01999999999998px;background:#a0a0a0"></div>
<div style="left:987px;top:431.4px;width:155.5px;height:1px;background:#a0a0a0"></div>
<div style="left:987px;top:444.06px;width:155.5px;height:1px;background:#a0a0a0"></div>
<div style="left:987px;top:456.71999999999997px;width:155.5px;height:1px;background:#a0a0a0"></div>
<div style="left:987px;top:469.38px;width:155.5px;height:1px;background:#a0a0a0"></div>
<div style="left:987px;top:482.03999999999996px;width:155.5px;height:1px;background:#a0a0a0"></div>
<div style="left:987px;top:494.7px;width:155.5px;height:1px;background:#a0a0a0"></div>
<div style="left:987px;top:507.36px;width:155.5px;height:1px;background:#a0a0a0"></div>
<div style="left:1141.5px;top:419px;width:1px;height:102.01999999999998px;background:#a0a0a0"></div>
<div style="left:987px;top:520.02px;width:155.5px;height:1px;background:#696969"></div>
<div class="t" style="left:989.5px;top:421.0px;width:45.40000000000009px;text-align:center;overflow:hidden">600</div>
<div class="t" style="left:989.5px;top:434.03000000000003px;width:45.40000000000009px;text-align:center;overflow:hidden">300</div>
<div class="t" style="left:989.5px;top:446.69px;width:45.40000000000009px;text-align:center;overflow:hidden">200</div>
<div class="t" style="left:989.5px;top:459.34999999999997px;width:45.40000000000009px;text-align:center;overflow:hidden">100</div>
<div class="t" style="left:989.5px;top:472.01px;width:45.40000000000009px;text-align:center;overflow:hidden">6</div>
<div class="t" style="left:989.5px;top:484.67px;width:45.40000000000009px;text-align:center;overflow:hidden">3</div>
<div class="t" style="left:989.5px;top:497.33px;width:45.40000000000009px;text-align:center;overflow:hidden">N</div>
<div class="t" style="left:989.5px;top:509.99px;width:45.40000000000009px;text-align:center;overflow:hidden">k</div>
<div style="left:803px;top:564px;width:169px;height:89px;border:1px solid #fff;"></div>
<div style="left:802px;top:563px;width:169px;height:89px;border:1px solid #a8a8a8;"></div>
<div class="t" style="left:808px;top:559.5px;padding:0 1px;background:#f0f0f0;">Cuttings Details</div>
<div class="t" style="left:830px;top:581px;width:48px;text-align:right;">Density (ppg)</div>
<div class="tb" style="left:890.6px;top:579px;width:44.5px;height:15px;line-height:15px;background:#f0f0f0;color:#6d6d6d;text-align:center;padding:0 2px;box-sizing:content-box;width:40.5px">21.7</div>
<div style="left:942.5px;top:582.7px;width:7px;height:7px;border-top:1px solid #6a6a6a;border-left:1px solid #6a6a6a;border-right:1px solid #e8e8e8;border-bottom:1px solid #e8e8e8;background:#fff;box-shadow:inset 1px 1px 0 #c8c8c8;"></div>
<div class="t" style="left:832px;top:606.2px;width:48px;text-align:right;">Diameter (in)</div>
<div class="tb" style="left:890.6px;top:604.2px;width:44.5px;height:15px;line-height:15px;background:#f0f0f0;color:#6d6d6d;text-align:center;padding:0 2px;box-sizing:content-box;width:40.5px">0.125</div>
<div style="left:942.5px;top:607.9000000000001px;width:7px;height:7px;border-top:1px solid #6a6a6a;border-left:1px solid #6a6a6a;border-right:1px solid #e8e8e8;border-bottom:1px solid #e8e8e8;background:#fff;box-shadow:inset 1px 1px 0 #c8c8c8;"></div>
<div class="t" style="left:833.5px;top:630.4px;width:48px;text-align:right;">Thickness (in)</div>
<div class="tb" style="left:890.6px;top:628.4px;width:44.5px;height:15px;line-height:15px;background:#f0f0f0;color:#6d6d6d;text-align:center;padding:0 2px;box-sizing:content-box;width:40.5px">0.125</div>
<div style="left:942.5px;top:632.1px;width:7px;height:7px;border-top:1px solid #6a6a6a;border-left:1px solid #6a6a6a;border-right:1px solid #e8e8e8;border-bottom:1px solid #e8e8e8;background:#fff;box-shadow:inset 1px 1px 0 #c8c8c8;"></div>
<div style="left:979px;top:564px;width:167px;height:89px;border:1px solid #fff;"></div>
<div style="left:978px;top:563px;width:167px;height:89px;border:1px solid #a8a8a8;"></div>
<div class="t" style="left:984px;top:559.5px;padding:0 1px;background:#f0f0f0;">Additional Fluids</div>
<div style="left:986px;top:575.5px;width:153px;height:55.5px;background:#ababab;border-top:1px solid #696969;border-left:1px solid #696969;border-right:1px solid #fff;border-bottom:1px solid #fff;"></div>
<div style="left:987px;top:576.5px;width:25.5px;height:11.799999999999955px;background:#f0f0f0;box-shadow:inset 1px 1px 0 #fff;"></div>
<div style="left:1013.5px;top:576.5px;width:49.799999999999955px;height:11.799999999999955px;background:#f0f0f0;box-shadow:inset 1px 1px 0 #fff;"></div>
<div style="left:1064.3px;top:576.5px;width:75.20000000000005px;height:11.799999999999955px;background:#f0f0f0;box-shadow:inset 1px 1px 0 #fff;"></div>
<div style="left:987px;top:589.3px;width:25.5px;height:12.0px;background:#f0f0f0;box-shadow:inset 1px 1px 0 #fff;"></div>
<div style="left:1013.5px;top:589.3px;width:49.799999999999955px;height:12.0px;background:#f0f0f0;box-shadow:inset 1px 1px 0 #f0f0f0;"></div>
<div style="left:1064.3px;top:589.3px;width:75.20000000000005px;height:12.0px;background:#f0f0f0;box-shadow:inset 1px 1px 0 #f0f0f0;"></div>
<div style="left:1012.5px;top:576.5px;width:1px;height:25.799999999999955px;background:#a0a0a0"></div>
<div style="left:1063.3px;top:576.5px;width:1px;height:25.799999999999955px;background:#a0a0a0"></div>
<div style="left:987px;top:588.3px;width:153.5px;height:1px;background:#a0a0a0"></div>
<div style="left:1139.5px;top:576.5px;width:1px;height:25.799999999999955px;background:#a0a0a0"></div>
<div style="left:987px;top:601.3px;width:153.5px;height:1px;background:#696969"></div>
<div class="t" style="left:1016.0px;top:578.1999999999999px;width:44.799999999999955px;text-align:center;overflow:hidden">Vol (bbls)</div>
<div class="t" style="left:1066.8px;top:578.1999999999999px;width:70.20000000000005px;text-align:center;overflow:hidden">Density (ppg)</div>
<div class="t" style="left:989.5px;top:591.0999999999999px;width:20.5px;text-align:right;overflow:hidden">1</div>
<div style="left:986.5px;top:638.5px;width:7px;height:7px;border-top:1px solid #6a6a6a;border-left:1px solid #6a6a6a;border-right:1px solid #e8e8e8;border-bottom:1px solid #e8e8e8;background:#fff;box-shadow:inset 1px 1px 0 #c8c8c8;"></div>
<div class="t" style="left:1000px;top:639.5px;">Enable</div>
<div style="left:1px;top:676px;width:1180px;height:1px;background:#fafafa;"></div>
<div style="left:1px;top:677px;width:961px;height:1px;background:#bdbdbd;"></div>
<div style="left:1px;top:678px;width:961px;height:1px;background:#fff;"></div>
<div style="left:964px;top:677px;width:216px;height:1px;background:#bdbdbd;"></div>
<div style="left:964px;top:678px;width:216px;height:1px;background:#fff;"></div>
<div style="left:964px;top:677px;width:1px;height:10px;background:#a8a8a8;"></div>
<div style="left:963px;top:677px;width:1px;height:10px;background:#fff;"></div>
<div style="left:1180px;top:677px;width:1px;height:10px;background:#fafafa;"></div>
</body></html>
